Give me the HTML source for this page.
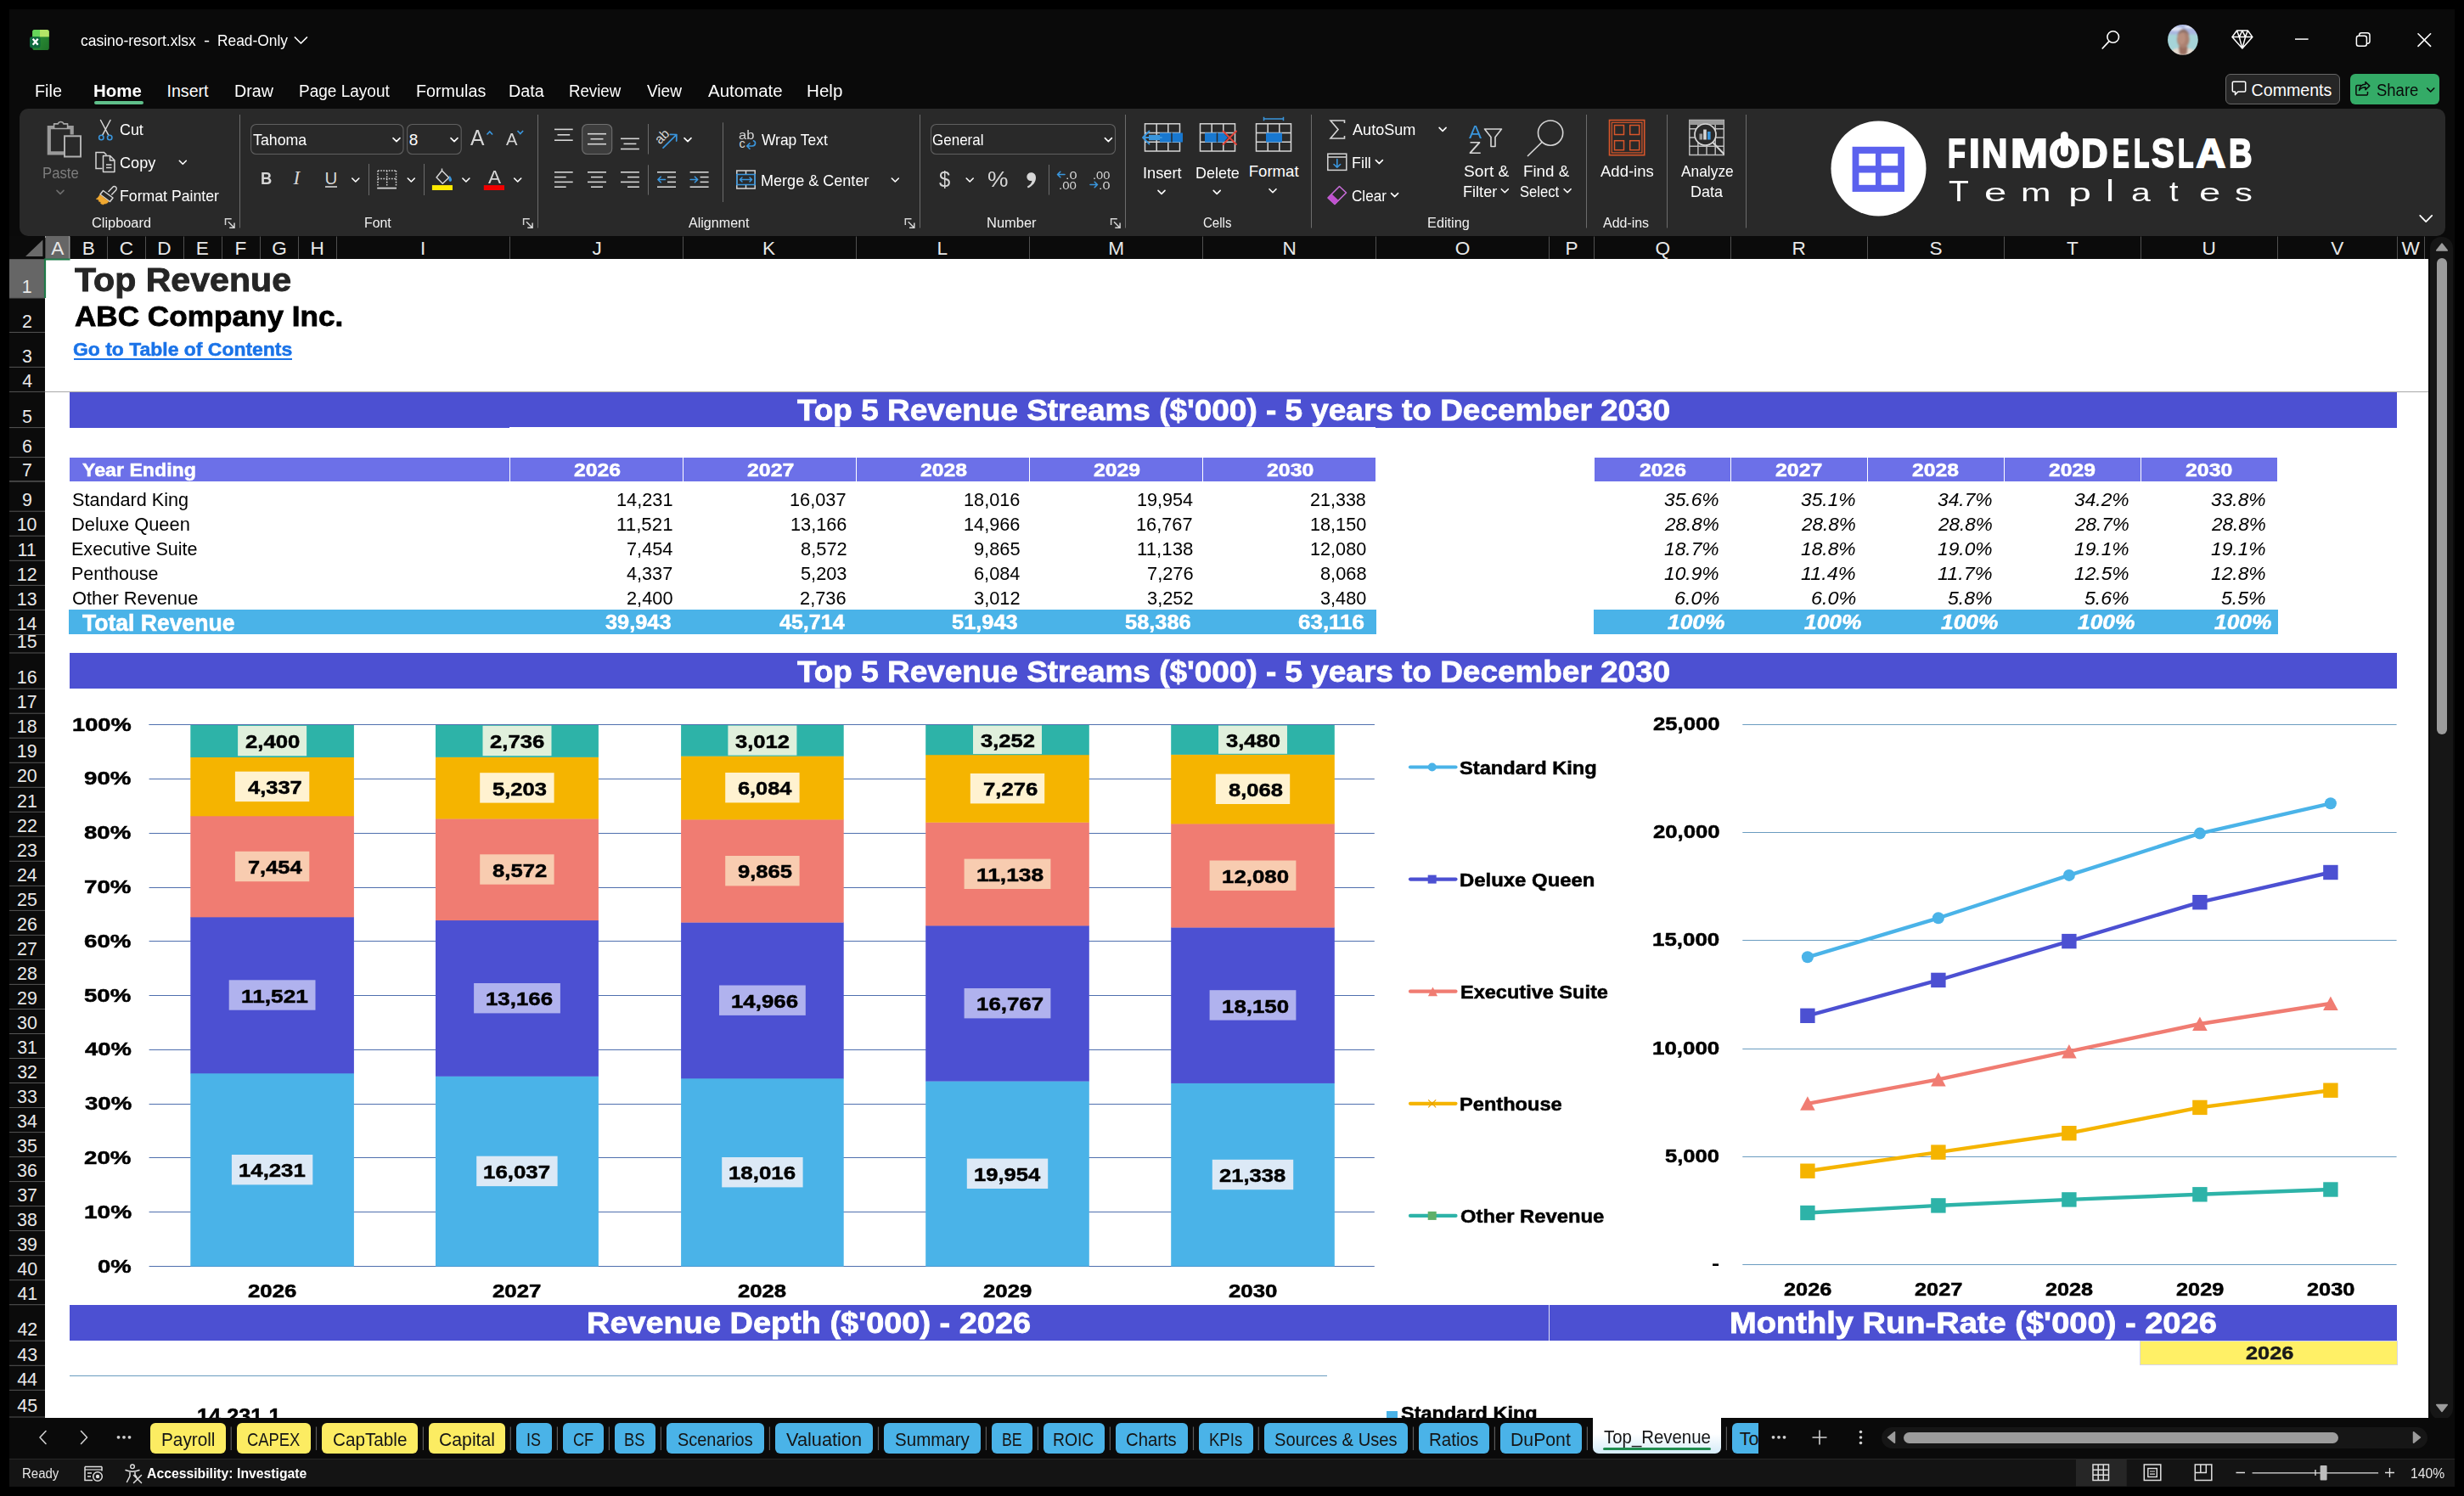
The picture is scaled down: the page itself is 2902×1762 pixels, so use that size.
<!DOCTYPE html>
<html><head><meta charset="utf-8"><title>casino-resort.xlsx - Excel</title>
<style>
html,body{margin:0;padding:0;background:#000;}
body{width:2902px;height:1762px;position:relative;overflow:hidden;font-family:"Liberation Sans",sans-serif;}
svg{position:absolute;left:0;top:0;overflow:visible}
</style></head><body>
<div style="position:absolute;left:11.0px;top:11.0px;width:2880.0px;height:1740.0px;background:#0a0a0a;"></div>
<svg width="2902" height="140"><g>
<defs><linearGradient id="xg" x1="0" y1="0" x2="1" y2="1"><stop offset="0" stop-color="#2f9a3a"/><stop offset="1" stop-color="#1f7229"/></linearGradient><clipPath id="xc"><rect x="38.1" y="35" width="19.8" height="24" rx="2.8"/></clipPath></defs>
<g clip-path="url(#xc)"><rect x="38.1" y="35" width="19.8" height="24" fill="url(#xg)"/><rect x="38.1" y="35" width="8.9" height="8.4" fill="#66d65a"/><rect x="47" y="35" width="10.900" height="8.400" fill="#b3e567"/></g>
<rect x="35" y="43.2" width="12.6" height="13.300" rx="2.400" fill="#0f6a3d"/>
<path d="M38.700 45.700l6 7M44.700 45.700l-6 7" stroke="#fff" stroke-width="2.300" fill="none"/>
</g>
<path d="M347.4 44.0 L354.4 51.0 L361.4 44.0" fill="none" stroke="#fff" stroke-width="1.7" stroke-linecap="round" stroke-linejoin="round"/>
<circle cx="2488.7" cy="43.5" r="6.8" fill="none" stroke="#fff" stroke-width="1.6"/><path d="M2484 48.6L2476.2 57" stroke="#fff" stroke-width="1.7" stroke-linecap="round"/>
<path d="M2634.5 36h12.8l5.6 7.6-12 13.4-12-13.4z M2629 43.6h23.8 M2634.5 36l2.8 7.6 3.6 13.4 3.6-13.4 2.8-7.6 M2637.3 43.6l3.6-7.6 3.6 7.6" fill="none" stroke="#fff" stroke-width="1.5" stroke-linejoin="round"/>
<path d="M2703 46.1h15.6" stroke="#fff" stroke-width="1.5"/>
<rect x="2775.4" y="42.2" width="12" height="12" rx="2.5" fill="none" stroke="#fff" stroke-width="1.5"/><path d="M2778.6 42v-0.6a2.6 2.6 0 0 1 2.6-2.6h7a2.8 2.8 0 0 1 2.8 2.8v7a2.6 2.6 0 0 1-2.6 2.6h-0.8" fill="none" stroke="#fff" stroke-width="1.5"/>
<path d="M2848 39.8l14.6 14.6M2862.6 39.8l-14.6 14.6" stroke="#fff" stroke-width="1.6" stroke-linecap="round"/>
<defs><radialGradient id="av" cx="50%" cy="55%" r="50%"><stop offset="0" stop-color="#b98f7c"/><stop offset="0.42" stop-color="#c4a090"/><stop offset="0.5" stop-color="#a9c6d4"/><stop offset="1" stop-color="#8fc0d6"/></radialGradient><clipPath id="avc"><circle cx="2570.9" cy="46.9" r="17.9"/></clipPath></defs>
<g clip-path="url(#avc)"><g style="filter:blur(1px)"><rect x="2550" y="26" width="42" height="42" fill="#a5d4d8"/><rect x="2550" y="26" width="42" height="14.500" fill="#a9b6e0"/><ellipse cx="2562" cy="34" rx="9" ry="2.500" fill="#dfe4f4"/><ellipse cx="2580" cy="31.500" rx="8" ry="2.200" fill="#dde2f3"/>
<path d="M2553 68c1-7 6-10.500 12-11.500h12c6 1 11 4.500 12 11.500z" fill="#e3dad0"/><path d="M2566 55h10.500l-1 8c-2.500 2-6 2-8.500 0z" fill="#9a6f60"/>
<ellipse cx="2571.300" cy="46.300" rx="7.300" ry="10.300" fill="#ab8070"/><ellipse cx="2569.500" cy="45" rx="4.500" ry="7.500" fill="#b98f7e"/><path d="M2564.500 42c1-5 4-7.500 7-7.500s6 2.500 7 7.500c-2-3-4.500-4-7-4s-5 1-7 4z" fill="#8d7068"/></g></g>
</svg>
<span style="position:absolute;left:94.50px;top:39.00px;font:normal 400 18.20px/18.20px 'Liberation Sans',sans-serif;color:#ffffff;white-space:pre;transform-origin:0 0;transform:scaleX(0.9596);">casino-resort.xlsx</span>
<span style="position:absolute;left:240.34px;top:39.00px;font:normal 400 18.20px/18.20px 'Liberation Sans',sans-serif;color:#ffffff;white-space:pre;transform-origin:0 0;transform:scaleX(1.1662);">-</span>
<span style="position:absolute;left:256.21px;top:39.00px;font:normal 400 18.20px/18.20px 'Liberation Sans',sans-serif;color:#ffffff;white-space:pre;transform-origin:0 0;transform:scaleX(0.9551);">Read-Only</span>
<span style="position:absolute;left:40.92px;top:98.00px;font:normal 400 19.60px/19.60px 'Liberation Sans',sans-serif;color:#ffffff;white-space:pre;transform-origin:0 0;transform:scaleX(1.0101);">File</span>
<span style="position:absolute;left:110.17px;top:98.00px;font:normal 700 19.60px/19.60px 'Liberation Sans',sans-serif;color:#ffffff;white-space:pre;transform-origin:0 0;transform:scaleX(1.0433);">Home</span>
<span style="position:absolute;left:196.54px;top:98.00px;font:normal 400 19.60px/19.60px 'Liberation Sans',sans-serif;color:#ffffff;white-space:pre;transform-origin:0 0;">Insert</span>
<span style="position:absolute;left:275.92px;top:98.00px;font:normal 400 19.60px/19.60px 'Liberation Sans',sans-serif;color:#ffffff;white-space:pre;transform-origin:0 0;transform:scaleX(1.0046);">Draw</span>
<span style="position:absolute;left:351.78px;top:98.00px;font:normal 400 19.60px/19.60px 'Liberation Sans',sans-serif;color:#ffffff;white-space:pre;transform-origin:0 0;transform:scaleX(0.9706);">Page Layout</span>
<span style="position:absolute;left:489.62px;top:98.00px;font:normal 400 19.60px/19.60px 'Liberation Sans',sans-serif;color:#ffffff;white-space:pre;transform-origin:0 0;transform:scaleX(1.0078);">Formulas</span>
<span style="position:absolute;left:598.92px;top:98.00px;font:normal 400 19.60px/19.60px 'Liberation Sans',sans-serif;color:#ffffff;white-space:pre;transform-origin:0 0;transform:scaleX(1.0104);">Data</span>
<span style="position:absolute;left:669.81px;top:98.00px;font:normal 400 19.60px/19.60px 'Liberation Sans',sans-serif;color:#ffffff;white-space:pre;transform-origin:0 0;transform:scaleX(0.9518);">Review</span>
<span style="position:absolute;left:761.80px;top:98.00px;font:normal 400 19.60px/19.60px 'Liberation Sans',sans-serif;color:#ffffff;white-space:pre;transform-origin:0 0;transform:scaleX(0.9728);">View</span>
<span style="position:absolute;left:834.20px;top:98.00px;font:normal 400 19.60px/19.60px 'Liberation Sans',sans-serif;color:#ffffff;white-space:pre;transform-origin:0 0;transform:scaleX(1.0445);">Automate</span>
<span style="position:absolute;left:949.75px;top:98.00px;font:normal 400 19.60px/19.60px 'Liberation Sans',sans-serif;color:#ffffff;white-space:pre;transform-origin:0 0;transform:scaleX(1.0520);">Help</span>
<div style="position:absolute;left:110.9px;top:119.4px;width:58.0px;height:3.6px;background:#5fbf8a;border-radius:2px;"></div>
<div style="position:absolute;left:2621.2px;top:87.1px;width:134.5px;height:35.5px;background:#262626;border:1px solid #666;border-radius:6px;box-sizing:border-box;"></div>
<div style="position:absolute;left:2767.9px;top:87.1px;width:105.3px;height:35.5px;background:#34ab67;border-radius:6px;"></div>
<svg width="2902" height="140"><path d="M2630.5 96.2h13a1.2 1.2 0 0 1 1.2 1.2v9.4a1.2 1.2 0 0 1-1.2 1.2h-7.6l-3.4 3.6v-3.6h-2a1.2 1.2 0 0 1-1.2-1.2v-9.4a1.2 1.2 0 0 1 1.2-1.2z" fill="none" stroke="#fff" stroke-width="1.5" stroke-linejoin="round"/><path d="M2781 100.5h-4.6a1.5 1.5 0 0 0-1.5 1.5v8.6a1.5 1.5 0 0 0 1.5 1.5h10.6a1.5 1.5 0 0 0 1.5-1.5v-2.5 M2786 96.5l4.8 4.6-4.8 4.6v-2.9c-3.6 0-5.8 1.2-7.4 3.6 0.4-4.4 3-7 7.4-7.2z" fill="none" stroke="#0a0a0a" stroke-width="1.5" stroke-linejoin="round"/><path d="M2858.7 104.0 L2862.7 108.0 L2866.7 104.0" fill="none" stroke="#0a0a0a" stroke-width="1.7" stroke-linecap="round" stroke-linejoin="round"/></svg>
<span style="position:absolute;left:2651.62px;top:97.00px;font:normal 400 19.60px/19.60px 'Liberation Sans',sans-serif;color:#ffffff;white-space:pre;transform-origin:0 0;">Comments</span>
<span style="position:absolute;left:2798.97px;top:97.00px;font:normal 400 19.60px/19.60px 'Liberation Sans',sans-serif;color:#0a0a0a;white-space:pre;transform-origin:0 0;transform:scaleX(0.9431);">Share</span>
<div style="position:absolute;left:23.0px;top:128.0px;width:2856.5px;height:150.0px;background:#292929;border-radius:10px;"></div>
<svg width="2902" height="300"><path d="M282.5 135V268.5" stroke="#6c6c6c" stroke-width="1"/><path d="M633.5 135V268.5" stroke="#6c6c6c" stroke-width="1"/><path d="M1083.5 135V268.5" stroke="#6c6c6c" stroke-width="1"/><path d="M1325.5 135V268.5" stroke="#6c6c6c" stroke-width="1"/><path d="M1544.5 135V268.5" stroke="#6c6c6c" stroke-width="1"/><path d="M1868.5 135V268.5" stroke="#6c6c6c" stroke-width="1"/><path d="M1963.5 135V268.5" stroke="#6c6c6c" stroke-width="1"/><path d="M2056.5 135V268.5" stroke="#6c6c6c" stroke-width="1"/><path d="M434.5 193V230" stroke="#6c6c6c" stroke-width="1"/><path d="M499.5 193V230" stroke="#6c6c6c" stroke-width="1"/><path d="M763.5 146V181.6" stroke="#6c6c6c" stroke-width="1"/><path d="M763.5 194.3V229.6" stroke="#6c6c6c" stroke-width="1"/><path d="M851.5 144.3V238" stroke="#6c6c6c" stroke-width="1"/><path d="M1235.5 194V229.6" stroke="#6c6c6c" stroke-width="1"/><path d="M63 150.2H57.8V180.400H75M80 150.200H84.700V158.500" fill="none" stroke="#9a9a9a" stroke-width="4.200"/><path d="M63.600 151.500v-5.600h4.600a3.600 3.600 0 0 1 6.800 0h4.600v5.600z" fill="#292929" stroke="#a8a8a8" stroke-width="1.600" stroke-linejoin="round"/><rect x="76" y="160.300" width="19" height="24.200" fill="#292929" stroke="#b0b0b0" stroke-width="2"/><path d="M67.0 224.4 L71.0 228.4 L75.0 224.4" fill="none" stroke="#6e6e6e" stroke-width="1.6" stroke-linecap="round" stroke-linejoin="round"/><path d="M118.5 141.5l9.3 17.6M130 141.5l-9.3 17.6" stroke="#d6d6d6" stroke-width="1.5" stroke-linecap="round"/><circle cx="119.3" cy="162" r="2.7" fill="none" stroke="#3a96dd" stroke-width="1.6"/><circle cx="129.2" cy="162" r="2.7" fill="none" stroke="#3a96dd" stroke-width="1.6"/><path d="M120.5 198.5h-7.5v-19h9.5l3 3" fill="none" stroke="#d6d6d6" stroke-width="1.5"/><path d="M121.5 183.5h8.2l5.2 5.2v13.8h-13.4z M129.5 183.8v5.2h5.2" fill="none" stroke="#d6d6d6" stroke-width="1.5" stroke-linejoin="round"/><path d="M125 194h6.5M125 197.5h6.5" stroke="#d6d6d6" stroke-width="1.4"/><path d="M211.3 189.3 L215.3 193.3 L219.3 189.3" fill="none" stroke="#ffffff" stroke-width="1.6" stroke-linecap="round" stroke-linejoin="round"/><path d="M127.5 226l5.2-5.6a2.6 2.6 0 0 1 3.8 3.6l-5.2 5.6" fill="none" stroke="#d6d6d6" stroke-width="1.5"/><path d="M121.5 224.5l11.5 8.5-3.5 4.5-11.5-8.5z" fill="none" stroke="#d6d6d6" stroke-width="1.5" stroke-linejoin="round"/><path d="M117.5 229.5l10.5 7.8c-1.5 2.2-3.2 3-5.2 2.6l-1.2 1.2-3-1.4 0.4-1.4-2.8-1.2 0.4-1.6-3.4-1.2c1.8-1 3.2-2.6 4.300-4.800z" fill="#f0a830" stroke="#f0a830" stroke-width="0.6"/><path d="M265.5 265.0V257.8H272.7" fill="none" stroke="#d6d6d6" stroke-width="1.5"/><path d="M268.9 261.2L275.7 268.0M276.0 262.5V268.3H270.2" fill="none" stroke="#d6d6d6" stroke-width="1.5"/><path d="M616.6 265.0V257.8H623.8" fill="none" stroke="#d6d6d6" stroke-width="1.5"/><path d="M620.0 261.2L626.8 268.0M627.1 262.5V268.3H621.3" fill="none" stroke="#d6d6d6" stroke-width="1.5"/><path d="M1066.3 265.0V257.8H1073.5" fill="none" stroke="#d6d6d6" stroke-width="1.5"/><path d="M1069.7 261.2L1076.5 268.0M1076.8 262.5V268.3H1071.0" fill="none" stroke="#d6d6d6" stroke-width="1.5"/><path d="M1308.6 265.0V257.8H1315.8" fill="none" stroke="#d6d6d6" stroke-width="1.5"/><path d="M1312.0 261.2L1318.8 268.0M1319.1 262.5V268.3H1313.3" fill="none" stroke="#d6d6d6" stroke-width="1.5"/><rect x="295.6" y="146.5" width="179.4" height="35" rx="6" fill="#292929" stroke="#606060" stroke-width="1.1"/><rect x="479.6" y="146.5" width="63.6" height="35" rx="6" fill="#292929" stroke="#606060" stroke-width="1.1"/><path d="M463.0 162.6 L467.0 166.6 L471.0 162.6" fill="none" stroke="#ffffff" stroke-width="1.6" stroke-linecap="round" stroke-linejoin="round"/><path d="M531.0 162.6 L535.0 166.6 L539.0 162.6" fill="none" stroke="#ffffff" stroke-width="1.6" stroke-linecap="round" stroke-linejoin="round"/><path d="M573.5 158.5l3.300-3.600 3.300 3.600" fill="none" stroke="#3a96dd" stroke-width="1.7"/><path d="M609.5 154l3.300 3.600 3.300-3.600" fill="none" stroke="#3a96dd" stroke-width="1.7"/><path d="M383.0 220.0H397.0" stroke="#d6d6d6" stroke-width="1.6"/><path d="M414.8 210.0 L418.8 214.0 L422.8 210.0" fill="none" stroke="#ffffff" stroke-width="1.6" stroke-linecap="round" stroke-linejoin="round"/><path d="M445 201h21.500M445 201v19M466.500 201v19M455.700 201v19M445 210.500h21.500" fill="none" stroke="#d6d6d6" stroke-width="1.5" stroke-dasharray="1.600 1.600"/><path d="M444.2 221.6H467.0" stroke="#d6d6d6" stroke-width="1.8"/><path d="M480.3 210.0 L484.3 214.0 L488.3 210.0" fill="none" stroke="#ffffff" stroke-width="1.6" stroke-linecap="round" stroke-linejoin="round"/><path d="M520.500 201l8.200 8.200-7.400 7-7.200-7.200z M520.500 201v-2.500" fill="none" stroke="#d6d6d6" stroke-width="1.5" stroke-linejoin="round"/><path d="M529.500 206.500c2.200 3 2.600 4.600 2.600 5.600a1.800 1.800 0 0 1-3.600 0c0-1 .4-2.600 1-5.600z" fill="#3a96dd"/><rect x="508.900" y="218.100" width="24.100" height="5.900" fill="#ffeb00"/><path d="M544.9 210.0 L548.9 214.0 L552.9 210.0" fill="none" stroke="#ffffff" stroke-width="1.6" stroke-linecap="round" stroke-linejoin="round"/><rect x="569.800" y="218.100" width="24.200" height="5.900" fill="#f00000"/><path d="M605.7 210.0 L609.7 214.0 L613.7 210.0" fill="none" stroke="#ffffff" stroke-width="1.6" stroke-linecap="round" stroke-linejoin="round"/><path d="M653.0 152.4H674.7" stroke="#d6d6d6" stroke-width="1.6"/><path d="M656.5 158.8H671.2" stroke="#d6d6d6" stroke-width="1.6"/><path d="M653.0 165.2H674.7" stroke="#d6d6d6" stroke-width="1.6"/><rect x="685.700" y="146.500" width="35" height="35" rx="6" fill="#3d3d3d" stroke="#707070" stroke-width="1.1"/><path d="M692.0 157.7H714.0" stroke="#d6d6d6" stroke-width="1.6"/><path d="M695.5 163.7H710.5" stroke="#d6d6d6" stroke-width="1.6"/><path d="M692.0 169.7H714.0" stroke="#d6d6d6" stroke-width="1.6"/><path d="M731.0 163.3H752.9" stroke="#d6d6d6" stroke-width="1.6"/><path d="M734.5 169.4H749.4" stroke="#d6d6d6" stroke-width="1.6"/><path d="M731.0 175.5H752.9" stroke="#d6d6d6" stroke-width="1.6"/><path d="M781 174.200l15.500-15.400M789.300 158.300l7.600.2-.2 7.600" fill="none" stroke="#3a96dd" stroke-width="1.7" stroke-linecap="round" stroke-linejoin="round"/><path d="M806.0 162.6 L810.0 166.6 L814.0 162.6" fill="none" stroke="#ffffff" stroke-width="1.6" stroke-linecap="round" stroke-linejoin="round"/><path d="M653.0 202.8H674.7" stroke="#d6d6d6" stroke-width="1.6"/><path d="M653.0 208.6H666.7" stroke="#d6d6d6" stroke-width="1.6"/><path d="M653.0 214.4H674.7" stroke="#d6d6d6" stroke-width="1.6"/><path d="M653.0 220.2H666.7" stroke="#d6d6d6" stroke-width="1.6"/><path d="M692.0 202.8H714.0" stroke="#d6d6d6" stroke-width="1.6"/><path d="M696.0 208.6H710.0" stroke="#d6d6d6" stroke-width="1.6"/><path d="M692.0 214.4H714.0" stroke="#d6d6d6" stroke-width="1.6"/><path d="M696.0 220.2H710.0" stroke="#d6d6d6" stroke-width="1.6"/><path d="M731.0 202.8H752.9" stroke="#d6d6d6" stroke-width="1.6"/><path d="M739.0 208.6H752.9" stroke="#d6d6d6" stroke-width="1.6"/><path d="M731.0 214.4H752.9" stroke="#d6d6d6" stroke-width="1.6"/><path d="M739.0 220.2H752.9" stroke="#d6d6d6" stroke-width="1.6"/><path d="M774.0 202.8H796.0" stroke="#d6d6d6" stroke-width="1.6"/><path d="M774.0 220.2H796.0" stroke="#d6d6d6" stroke-width="1.6"/><path d="M786.0 208.6H796.0" stroke="#d6d6d6" stroke-width="1.6"/><path d="M786.0 214.4H796.0" stroke="#d6d6d6" stroke-width="1.6"/><path d="M783.5 211.500H775M778.2 208.200l-3.300 3.300 3.300 3.300" fill="none" stroke="#3a96dd" stroke-width="1.6" stroke-linecap="round" stroke-linejoin="round"/><path d="M812.6 202.8H834.6" stroke="#d6d6d6" stroke-width="1.6"/><path d="M812.6 220.2H834.6" stroke="#d6d6d6" stroke-width="1.6"/><path d="M824.6 208.6H834.6" stroke="#d6d6d6" stroke-width="1.6"/><path d="M824.6 214.4H834.6" stroke="#d6d6d6" stroke-width="1.6"/><path d="M813.1 211.500H821.6M818.4 208.200l3.300 3.300-3.300 3.300" fill="none" stroke="#3a96dd" stroke-width="1.6" stroke-linecap="round" stroke-linejoin="round"/><path d="M887.500 165.800c3.200 1.200 2.600 6-1.500 6.200h-6M883 168.800l-3.300 3.200 3.300 3.200" fill="none" stroke="#3a96dd" stroke-width="1.6" stroke-linecap="round" stroke-linejoin="round"/><rect x="867.800" y="201" width="21.400" height="21" fill="none" stroke="#d6d6d6" stroke-width="1.5"/><path d="M878.500 201v4.500M878.500 217.500v4.500" stroke="#d6d6d6" stroke-width="1.5"/><rect x="867.800" y="205.500" width="21.400" height="12" fill="none" stroke="#3a96dd" stroke-width="1.5"/><path d="M871.500 211.500h14M874 209l-2.600 2.500 2.600 2.500M883 209l2.600 2.500-2.600 2.500" fill="none" stroke="#3a96dd" stroke-width="1.5" stroke-linecap="round" stroke-linejoin="round"/><path d="M1050.3 210.0 L1054.3 214.0 L1058.3 210.0" fill="none" stroke="#ffffff" stroke-width="1.6" stroke-linecap="round" stroke-linejoin="round"/><rect x="1096.500" y="146.500" width="217" height="35" rx="6" fill="#292929" stroke="#606060" stroke-width="1.1"/><path d="M1301.4 162.6 L1305.4 166.6 L1309.4 162.6" fill="none" stroke="#ffffff" stroke-width="1.6" stroke-linecap="round" stroke-linejoin="round"/><path d="M1138.2 210.0 L1142.2 214.0 L1146.2 210.0" fill="none" stroke="#ffffff" stroke-width="1.6" stroke-linecap="round" stroke-linejoin="round"/><path d="M1214.6 203.2c3.300 0 5.400 2.400 5.400 6 0 5.400-3.700 9.600-9.200 12.200l-1-1.600c3.300-1.800 5.300-4.100 5.700-7-.5.200-1 .3-1.600.3a4.900 4.900 0 0 1 .7-9.900z" fill="#d6d6d6"/><path d="M1254 205.500h-8.500M1248.800 202.300l-3.300 3.200 3.300 3.200" fill="none" stroke="#3a96dd" stroke-width="1.6" stroke-linecap="round" stroke-linejoin="round"/><path d="M1284 217.500h8.500M1289.200 214.300l3.300 3.200-3.300 3.200" fill="none" stroke="#3a96dd" stroke-width="1.6" stroke-linecap="round" stroke-linejoin="round"/><rect x="1348.5" y="145.8" width="41.0" height="32.19999999999999" fill="none" stroke="#d6d6d6" stroke-width="1.5"/><path d="M1362.2 145.8V178" stroke="#d6d6d6" stroke-width="1.5"/><path d="M1375.8 145.8V178" stroke="#d6d6d6" stroke-width="1.5"/><path d="M1348.5 156.5H1389.5" stroke="#d6d6d6" stroke-width="1.5"/><path d="M1348.5 167.3H1389.5" stroke="#d6d6d6" stroke-width="1.5"/><rect x="1366" y="156.500" width="27" height="11" fill="#1878d0"/><path d="M1380 156.500v11" stroke="#292929" stroke-width="1.5"/><path d="M1368 162h-21M1353.500 154.500l-7.500 7.500 7.500 7.500" fill="none" stroke="#3a96dd" stroke-width="1.8" stroke-linecap="round" stroke-linejoin="round"/><path d="M1353 158.800h13v6.400h-13" fill="#3a96dd"/><rect x="1413.5" y="145.8" width="41.0" height="32.19999999999999" fill="none" stroke="#d6d6d6" stroke-width="1.5"/><path d="M1427.2 145.8V178" stroke="#d6d6d6" stroke-width="1.5"/><path d="M1440.8 145.8V178" stroke="#d6d6d6" stroke-width="1.5"/><path d="M1413.5 156.5H1454.5" stroke="#d6d6d6" stroke-width="1.5"/><path d="M1413.5 167.3H1454.5" stroke="#d6d6d6" stroke-width="1.5"/><rect x="1419" y="156.500" width="22" height="11" fill="#1878d0"/><path d="M1433.500 156.500v11" stroke="#292929" stroke-width="1.5"/><path d="M1441 156.500l5 5.500-5 5.500z" fill="#1878d0"/><path d="M1440.500 154.500l15.500 15.500M1456 154.500l-15.500 15.500" stroke="#e0443a" stroke-width="2" stroke-linecap="round"/><rect x="1479.5" y="145.8" width="41.0" height="32.19999999999999" fill="none" stroke="#d6d6d6" stroke-width="1.5"/><path d="M1493.2 145.8V178" stroke="#d6d6d6" stroke-width="1.5"/><path d="M1506.8 145.8V178" stroke="#d6d6d6" stroke-width="1.5"/><path d="M1479.5 156.5H1520.5" stroke="#d6d6d6" stroke-width="1.5"/><path d="M1479.5 167.3H1520.5" stroke="#d6d6d6" stroke-width="1.5"/><rect x="1491" y="156.500" width="19" height="11" fill="#1878d0"/><path d="M1488.500 140h23M1488.500 137.800v4.400M1511.500 137.800v4.400" stroke="#3a96dd" stroke-width="1.5"/><path d="M1364.0 224.4 L1368.0 228.4 L1372.0 224.4" fill="none" stroke="#ffffff" stroke-width="1.6" stroke-linecap="round" stroke-linejoin="round"/><path d="M1429.2 224.4 L1433.2 228.4 L1437.2 224.4" fill="none" stroke="#ffffff" stroke-width="1.6" stroke-linecap="round" stroke-linejoin="round"/><path d="M1495.0 222.7 L1499.0 226.7 L1503.0 222.7" fill="none" stroke="#ffffff" stroke-width="1.6" stroke-linecap="round" stroke-linejoin="round"/><path d="M1583.500 145v-3h-16.500l9 10.500-9 10.500h16.500v-3" fill="none" stroke="#d6d6d6" stroke-width="1.6" stroke-linejoin="miter"/><path d="M1695.1 150.4 L1699.1 154.4 L1703.1 150.4" fill="none" stroke="#ffffff" stroke-width="1.6" stroke-linecap="round" stroke-linejoin="round"/><rect x="1563.800" y="181.200" width="22" height="19.200" fill="none" stroke="#d6d6d6" stroke-width="1.5"/><path d="M1563.800 185h22" stroke="#d6d6d6" stroke-width="1.5"/><path d="M1574.800 187.500v9.500M1571 193.500l3.800 3.600 3.800-3.600" fill="none" stroke="#3a96dd" stroke-width="1.6" stroke-linecap="round" stroke-linejoin="round"/><path d="M1620.4 188.6 L1624.4 192.6 L1628.4 188.6" fill="none" stroke="#ffffff" stroke-width="1.6" stroke-linecap="round" stroke-linejoin="round"/><path d="M1577.500 219.500l8 7.500-13.500 13.500-8-7.500z" fill="none" stroke="#c66cd6" stroke-width="1.6" stroke-linejoin="round"/><path d="M1568.500 228.500l8 7.500-4.500 4.500-8-7.500z" fill="#c050d0"/><path d="M1638.6 227.6 L1642.6 231.6 L1646.6 227.6" fill="none" stroke="#ffffff" stroke-width="1.6" stroke-linecap="round" stroke-linejoin="round"/><path d="M1748.500 152h20l-7.500 9.500v11h-5v-11z" fill="none" stroke="#d6d6d6" stroke-width="1.6" stroke-linejoin="round"/><path d="M1768.3 222.7 L1772.3 226.7 L1776.3 222.7" fill="none" stroke="#ffffff" stroke-width="1.6" stroke-linecap="round" stroke-linejoin="round"/><circle cx="1826.100" cy="156.600" r="14.600" fill="none" stroke="#d6d6d6" stroke-width="1.6"/><path d="M1816 167.500l-16.500 16" stroke="#d6d6d6" stroke-width="1.7" stroke-linecap="round"/><path d="M1842.1 222.7 L1846.1 226.7 L1850.1 222.7" fill="none" stroke="#ffffff" stroke-width="1.6" stroke-linecap="round" stroke-linejoin="round"/><rect x="1895.500" y="141.500" width="41.200" height="41.200" fill="none" stroke="#d8562a" stroke-width="1.6"/><rect x="1898.300" y="144.300" width="35.600" height="35.600" fill="none" stroke="#d8562a" stroke-width="1.2"/><rect x="1901.5" y="147.5" width="11" height="11" fill="none" stroke="#d8562a" stroke-width="1.5"/><rect x="1919.7" y="147.5" width="11" height="11" fill="none" stroke="#d8562a" stroke-width="1.5"/><rect x="1901.5" y="165.7" width="11" height="11" fill="none" stroke="#d8562a" stroke-width="1.5"/><rect x="1919.7" y="165.7" width="11" height="11" fill="none" stroke="#d8562a" stroke-width="1.5"/><rect x="1989.8" y="141.5" width="40.5" height="41.0" fill="none" stroke="#bdbdbd" stroke-width="1.5"/><path d="M1999.9 141.5V182.5" stroke="#bdbdbd" stroke-width="1.5"/><path d="M2010.0 141.5V182.5" stroke="#bdbdbd" stroke-width="1.5"/><path d="M2020.2 141.5V182.5" stroke="#bdbdbd" stroke-width="1.5"/><path d="M1989.8 151.8H2030.3" stroke="#bdbdbd" stroke-width="1.5"/><path d="M1989.8 162.0H2030.3" stroke="#bdbdbd" stroke-width="1.5"/><path d="M1989.8 172.2H2030.3" stroke="#bdbdbd" stroke-width="1.5"/><rect x="1989.800" y="141.500" width="40.500" height="5.500" fill="#9a9a9a"/><circle cx="2008.500" cy="158.500" r="12.500" fill="#292929" stroke="#d6d6d6" stroke-width="1.7"/><rect x="2001.500" y="157.500" width="3.600" height="7" fill="#9a9a9a"/><rect x="2006.200" y="152.500" width="3.600" height="12" fill="#d6d6d6"/><rect x="2011" y="155" width="3.600" height="9.500" fill="#3a96dd"/><path d="M2017.500 168l13 13.500" stroke="#d6d6d6" stroke-width="2"/><circle cx="2212.500" cy="198.400" r="56" fill="#fff"/><rect x="2181.600" y="172.800" width="61.400" height="53.100" fill="#5b61ee"/><rect x="2189.4" y="180.9" width="19.500" height="14.300" fill="#fff"/><rect x="2215.7" y="180.9" width="19.500" height="14.300" fill="#fff"/><rect x="2189.4" y="203.5" width="19.500" height="14.300" fill="#fff"/><rect x="2215.7" y="203.5" width="19.500" height="14.300" fill="#fff"/><path d="M2850.2 253.8 L2857.2 261.2 L2864.2 253.8" fill="none" stroke="#ffffff" stroke-width="1.7" stroke-linecap="round" stroke-linejoin="round"/></svg>
<span style="position:absolute;left:50.36px;top:195.00px;font:normal 400 18.60px/18.60px 'Liberation Sans',sans-serif;color:#7d7d7d;white-space:pre;transform-origin:0 0;transform:scaleX(0.8983);">Paste</span>
<span style="position:absolute;left:141.31px;top:144.00px;font:normal 400 18.60px/18.60px 'Liberation Sans',sans-serif;color:#ffffff;white-space:pre;transform-origin:0 0;transform:scaleX(0.9606);">Cut</span>
<span style="position:absolute;left:141.29px;top:183.00px;font:normal 400 18.60px/18.60px 'Liberation Sans',sans-serif;color:#ffffff;white-space:pre;transform-origin:0 0;transform:scaleX(0.9741);">Copy</span>
<span style="position:absolute;left:140.79px;top:222.00px;font:normal 400 18.60px/18.60px 'Liberation Sans',sans-serif;color:#ffffff;white-space:pre;transform-origin:0 0;transform:scaleX(0.9507);">Format Painter</span>
<span style="position:absolute;left:108.08px;top:255.00px;font:normal 400 15.80px/15.80px 'Liberation Sans',sans-serif;color:#f2f2f2;white-space:pre;transform-origin:0 0;transform:scaleX(1.0348);">Clipboard</span>
<span style="position:absolute;left:429.03px;top:255.00px;font:normal 400 15.80px/15.80px 'Liberation Sans',sans-serif;color:#f2f2f2;white-space:pre;transform-origin:0 0;transform:scaleX(1.0047);">Font</span>
<span style="position:absolute;left:810.60px;top:255.00px;font:normal 400 15.80px/15.80px 'Liberation Sans',sans-serif;color:#f2f2f2;white-space:pre;transform-origin:0 0;transform:scaleX(1.0178);">Alignment</span>
<span style="position:absolute;left:1161.88px;top:255.00px;font:normal 400 15.80px/15.80px 'Liberation Sans',sans-serif;color:#f2f2f2;white-space:pre;transform-origin:0 0;transform:scaleX(1.0427);">Number</span>
<span style="position:absolute;left:1417.35px;top:255.00px;font:normal 400 15.80px/15.80px 'Liberation Sans',sans-serif;color:#f2f2f2;white-space:pre;transform-origin:0 0;transform:scaleX(0.9523);">Cells</span>
<span style="position:absolute;left:1680.99px;top:255.00px;font:normal 400 15.80px/15.80px 'Liberation Sans',sans-serif;color:#f2f2f2;white-space:pre;transform-origin:0 0;transform:scaleX(1.0331);">Editing</span>
<span style="position:absolute;left:1888.00px;top:255.00px;font:normal 400 15.80px/15.80px 'Liberation Sans',sans-serif;color:#f2f2f2;white-space:pre;transform-origin:0 0;transform:scaleX(1.0093);">Add-ins</span>
<span style="position:absolute;left:298.44px;top:155.00px;font:normal 400 19.00px/19.00px 'Liberation Sans',sans-serif;color:#ffffff;white-space:pre;transform-origin:0 0;transform:scaleX(0.9350);">Tahoma</span>
<span style="position:absolute;left:481.64px;top:155.00px;font:normal 400 19.00px/19.00px 'Liberation Sans',sans-serif;color:#ffffff;white-space:pre;transform-origin:0 0;">8</span>
<span style="position:absolute;left:554.40px;top:150.00px;font:normal 400 25.50px/25.50px 'Liberation Sans',sans-serif;color:#d6d6d6;white-space:pre;transform-origin:0 0;transform:scaleX(0.9671);">A</span>
<span style="position:absolute;left:595.80px;top:153.00px;font:normal 400 21.00px/21.00px 'Liberation Sans',sans-serif;color:#d6d6d6;white-space:pre;transform-origin:0 0;transform:scaleX(0.9595);">A</span>
<span style="position:absolute;left:306.61px;top:199.00px;font:normal 700 21.00px/21.00px 'Liberation Sans',sans-serif;color:#d6d6d6;white-space:pre;transform-origin:0 0;transform:scaleX(0.8743);">B</span>
<span style="position:absolute;left:345.5px;top:197.5px;font:italic 400 23px/23px 'Liberation Serif',serif;color:#d6d6d6">I</span>
<span style="position:absolute;left:382.62px;top:200.00px;font:normal 400 20.50px/20.50px 'Liberation Sans',sans-serif;color:#d6d6d6;white-space:pre;transform-origin:0 0;">U</span>
<span style="position:absolute;left:574.50px;top:198.00px;font:normal 400 22.00px/22.00px 'Liberation Sans',sans-serif;color:#d6d6d6;white-space:pre;transform-origin:0 0;transform:scaleX(1.0253);">A</span>
<span style="position:absolute;left:770.5px;top:152.5px;font:400 15.5px/15.5px 'Liberation Sans',sans-serif;color:#d6d6d6;transform:rotate(-45deg);transform-origin:50% 50%;">ab</span>
<span style="position:absolute;left:870.14px;top:152.00px;font:normal 400 14.60px/14.60px 'Liberation Sans',sans-serif;color:#d6d6d6;white-space:pre;transform-origin:0 0;transform:scaleX(1.1305);">ab</span>
<span style="position:absolute;left:870.42px;top:162.00px;font:normal 400 14.60px/14.60px 'Liberation Sans',sans-serif;color:#d6d6d6;white-space:pre;transform-origin:0 0;">c</span>
<span style="position:absolute;left:897.41px;top:156.00px;font:normal 400 18.60px/18.60px 'Liberation Sans',sans-serif;color:#ffffff;white-space:pre;transform-origin:0 0;transform:scaleX(0.9363);">Wrap Text</span>
<span style="position:absolute;left:896.06px;top:204.00px;font:normal 400 18.60px/18.60px 'Liberation Sans',sans-serif;color:#ffffff;white-space:pre;transform-origin:0 0;transform:scaleX(0.9710);">Merge &amp; Center</span>
<span style="position:absolute;left:1098.25px;top:155.00px;font:normal 400 19.00px/19.00px 'Liberation Sans',sans-serif;color:#ffffff;white-space:pre;transform-origin:0 0;transform:scaleX(0.8950);">General</span>
<span style="position:absolute;left:1106.26px;top:199.00px;font:normal 400 25.00px/25.00px 'Liberation Sans',sans-serif;color:#d6d6d6;white-space:pre;transform-origin:0 0;transform:scaleX(0.9509);">$</span>
<span style="position:absolute;left:1162.74px;top:198.00px;font:normal 400 26.00px/26.00px 'Liberation Sans',sans-serif;color:#d6d6d6;white-space:pre;transform-origin:0 0;transform:scaleX(1.0600);">%</span>
<span style="position:absolute;left:1254.54px;top:200.00px;font:normal 400 13.50px/13.50px 'Liberation Sans',sans-serif;color:#d6d6d6;white-space:pre;transform-origin:0 0;transform:scaleX(1.1998);">.0</span>
<span style="position:absolute;left:1247.15px;top:212.00px;font:normal 400 13.50px/13.50px 'Liberation Sans',sans-serif;color:#d6d6d6;white-space:pre;transform-origin:0 0;transform:scaleX(1.1126);">.00</span>
<span style="position:absolute;left:1286.68px;top:200.00px;font:normal 400 13.50px/13.50px 'Liberation Sans',sans-serif;color:#d6d6d6;white-space:pre;transform-origin:0 0;transform:scaleX(1.0833);">.00</span>
<span style="position:absolute;left:1293.54px;top:212.00px;font:normal 400 13.50px/13.50px 'Liberation Sans',sans-serif;color:#d6d6d6;white-space:pre;transform-origin:0 0;transform:scaleX(1.1998);">.0</span>
<span style="position:absolute;left:1345.66px;top:195.00px;font:normal 400 18.60px/18.60px 'Liberation Sans',sans-serif;color:#ffffff;white-space:pre;transform-origin:0 0;transform:scaleX(0.9791);">Insert</span>
<span style="position:absolute;left:1407.96px;top:195.00px;font:normal 400 18.60px/18.60px 'Liberation Sans',sans-serif;color:#ffffff;white-space:pre;transform-origin:0 0;transform:scaleX(0.9644);">Delete</span>
<span style="position:absolute;left:1470.71px;top:193.00px;font:normal 400 18.60px/18.60px 'Liberation Sans',sans-serif;color:#ffffff;white-space:pre;transform-origin:0 0;">Format</span>
<span style="position:absolute;left:1593.20px;top:144.00px;font:normal 400 18.60px/18.60px 'Liberation Sans',sans-serif;color:#ffffff;white-space:pre;transform-origin:0 0;transform:scaleX(0.9731);">AutoSum</span>
<span style="position:absolute;left:1591.77px;top:183.00px;font:normal 400 18.60px/18.60px 'Liberation Sans',sans-serif;color:#ffffff;white-space:pre;transform-origin:0 0;transform:scaleX(0.9611);">Fill</span>
<span style="position:absolute;left:1592.34px;top:222.00px;font:normal 400 18.60px/18.60px 'Liberation Sans',sans-serif;color:#ffffff;white-space:pre;transform-origin:0 0;transform:scaleX(0.9200);">Clear</span>
<span style="position:absolute;left:1729.50px;top:145.00px;font:normal 400 22.00px/22.00px 'Liberation Sans',sans-serif;color:#3a96dd;white-space:pre;transform-origin:0 0;transform:scaleX(1.0253);">A</span>
<span style="position:absolute;left:1729.79px;top:164.00px;font:normal 400 20.00px/20.00px 'Liberation Sans',sans-serif;color:#d6d6d6;white-space:pre;transform-origin:0 0;transform:scaleX(1.1818);">Z</span>
<span style="position:absolute;left:1724.13px;top:193.00px;font:normal 400 18.60px/18.60px 'Liberation Sans',sans-serif;color:#ffffff;white-space:pre;transform-origin:0 0;transform:scaleX(1.0337);">Sort &amp;</span>
<span style="position:absolute;left:1722.85px;top:217.00px;font:normal 400 18.60px/18.60px 'Liberation Sans',sans-serif;color:#ffffff;white-space:pre;transform-origin:0 0;transform:scaleX(0.9741);">Filter</span>
<span style="position:absolute;left:1793.90px;top:193.00px;font:normal 400 18.60px/18.60px 'Liberation Sans',sans-serif;color:#ffffff;white-space:pre;transform-origin:0 0;transform:scaleX(1.0079);">Find &amp;</span>
<span style="position:absolute;left:1789.85px;top:217.00px;font:normal 400 18.60px/18.60px 'Liberation Sans',sans-serif;color:#ffffff;white-space:pre;transform-origin:0 0;transform:scaleX(0.8938);">Select</span>
<span style="position:absolute;left:1885.00px;top:193.00px;font:normal 400 18.60px/18.60px 'Liberation Sans',sans-serif;color:#ffffff;white-space:pre;transform-origin:0 0;transform:scaleX(0.9951);">Add-ins</span>
<span style="position:absolute;left:1980.00px;top:193.00px;font:normal 400 18.60px/18.60px 'Liberation Sans',sans-serif;color:#ffffff;white-space:pre;transform-origin:0 0;transform:scaleX(0.9328);">Analyze</span>
<span style="position:absolute;left:1990.76px;top:217.00px;font:normal 400 18.60px/18.60px 'Liberation Sans',sans-serif;color:#ffffff;white-space:pre;transform-origin:0 0;transform:scaleX(0.9667);">Data</span>
<span style="position:absolute;left:2294.17px;top:157.00px;font:normal 700 48.00px/48.00px 'Liberation Sans',sans-serif;color:#ffffff;white-space:pre;transform-origin:0 0;transform:scaleX(0.7149);-webkit-text-stroke:2.00px #ffffff;">F</span>
<span style="position:absolute;left:2318.64px;top:157.00px;font:normal 700 48.00px/48.00px 'Liberation Sans',sans-serif;color:#ffffff;white-space:pre;transform-origin:0 0;transform:scaleX(0.9483);-webkit-text-stroke:2.00px #ffffff;">I</span>
<span style="position:absolute;left:2334.27px;top:157.00px;font:normal 700 48.00px/48.00px 'Liberation Sans',sans-serif;color:#ffffff;white-space:pre;transform-origin:0 0;transform:scaleX(0.8757);-webkit-text-stroke:2.00px #ffffff;">N</span>
<span style="position:absolute;left:2367.67px;top:157.00px;font:normal 700 48.00px/48.00px 'Liberation Sans',sans-serif;color:#ffffff;white-space:pre;transform-origin:0 0;transform:scaleX(1.0982);-webkit-text-stroke:2.00px #ffffff;">M</span>
<span style="position:absolute;left:2413.01px;top:157.00px;font:normal 700 48.00px/48.00px 'Liberation Sans',sans-serif;color:#ffffff;white-space:pre;transform-origin:0 0;transform:scaleX(0.9862);-webkit-text-stroke:2.00px #ffffff;">O</span>
<span style="position:absolute;left:2450.56px;top:157.00px;font:normal 700 48.00px/48.00px 'Liberation Sans',sans-serif;color:#ffffff;white-space:pre;transform-origin:0 0;transform:scaleX(0.9112);-webkit-text-stroke:2.00px #ffffff;">D</span>
<span style="position:absolute;left:2487.68px;top:157.00px;font:normal 700 48.00px/48.00px 'Liberation Sans',sans-serif;color:#ffffff;white-space:pre;transform-origin:0 0;transform:scaleX(0.6158);-webkit-text-stroke:2.00px #ffffff;">E</span>
<span style="position:absolute;left:2512.84px;top:157.00px;font:normal 700 48.00px/48.00px 'Liberation Sans',sans-serif;color:#ffffff;white-space:pre;transform-origin:0 0;transform:scaleX(0.6270);-webkit-text-stroke:2.00px #ffffff;">L</span>
<span style="position:absolute;left:2534.30px;top:157.00px;font:normal 700 48.00px/48.00px 'Liberation Sans',sans-serif;color:#ffffff;white-space:pre;transform-origin:0 0;transform:scaleX(0.8333);-webkit-text-stroke:2.00px #ffffff;">S</span>
<span style="position:absolute;left:2565.03px;top:157.00px;font:normal 700 48.00px/48.00px 'Liberation Sans',sans-serif;color:#ffffff;white-space:pre;transform-origin:0 0;transform:scaleX(0.6311);-webkit-text-stroke:2.00px #ffffff;">L</span>
<span style="position:absolute;left:2586.60px;top:157.00px;font:normal 700 48.00px/48.00px 'Liberation Sans',sans-serif;color:#ffffff;white-space:pre;transform-origin:0 0;-webkit-text-stroke:2.00px #ffffff;">A</span>
<span style="position:absolute;left:2625.13px;top:157.00px;font:normal 700 48.00px/48.00px 'Liberation Sans',sans-serif;color:#ffffff;white-space:pre;transform-origin:0 0;transform:scaleX(0.7923);-webkit-text-stroke:2.00px #ffffff;">B</span>
<svg width="2902" height="300"><path d="M2431.4 159.4v20.6" stroke="#fff" stroke-width="8.9" stroke-linecap="round"/></svg>
<span style="position:absolute;left:2294.62px;top:207.00px;font:normal 400 35.00px/35.00px 'Liberation Sans',sans-serif;color:#ffffff;white-space:pre;transform-origin:0 0;transform:scaleX(1.1178);">T</span>
<span style="position:absolute;left:2336.50px;top:212.00px;font:normal 400 29.50px/29.50px 'Liberation Sans',sans-serif;color:#ffffff;white-space:pre;transform-origin:0 0;transform:scaleX(1.6084);">e</span>
<span style="position:absolute;left:2379.53px;top:212.00px;font:normal 400 29.50px/29.50px 'Liberation Sans',sans-serif;color:#ffffff;white-space:pre;transform-origin:0 0;transform:scaleX(1.4425);">m</span>
<span style="position:absolute;left:2435.94px;top:212.00px;font:normal 400 29.50px/29.50px 'Liberation Sans',sans-serif;color:#ffffff;white-space:pre;transform-origin:0 0;transform:scaleX(1.6497);">p</span>
<span style="position:absolute;left:2479.94px;top:207.00px;font:normal 400 35.00px/35.00px 'Liberation Sans',sans-serif;color:#ffffff;white-space:pre;transform-origin:0 0;transform:scaleX(1.3016);">l</span>
<span style="position:absolute;left:2510.46px;top:212.00px;font:normal 400 29.50px/29.50px 'Liberation Sans',sans-serif;color:#ffffff;white-space:pre;transform-origin:0 0;transform:scaleX(1.3888);">a</span>
<span style="position:absolute;left:2555.43px;top:209.00px;font:normal 400 33.00px/33.00px 'Liberation Sans',sans-serif;color:#ffffff;white-space:pre;transform-origin:0 0;transform:scaleX(1.1527);">t</span>
<span style="position:absolute;left:2589.58px;top:212.00px;font:normal 400 29.50px/29.50px 'Liberation Sans',sans-serif;color:#ffffff;white-space:pre;transform-origin:0 0;transform:scaleX(1.5435);">e</span>
<span style="position:absolute;left:2632.34px;top:212.00px;font:normal 400 29.50px/29.50px 'Liberation Sans',sans-serif;color:#ffffff;white-space:pre;transform-origin:0 0;transform:scaleX(1.4183);">s</span>
<div style="position:absolute;left:11.0px;top:278.0px;width:2850.0px;height:27.0px;background:#0b0b0b;"></div>
<div style="position:absolute;left:11.0px;top:305.0px;width:42.0px;height:1365.0px;background:#0b0b0b;"></div>
<div style="position:absolute;left:53.0px;top:305.0px;width:2807.2px;height:1365.2px;background:#fff;"></div>
<div style="position:absolute;left:53.0px;top:278.0px;width:29.4px;height:26.5px;background:#666;border-left:1px solid #999;border-right:1px solid #999;box-sizing:border-box;"></div>
<div style="position:absolute;left:11.0px;top:305.0px;width:41.0px;height:46.0px;background:#666;border-top:1px solid #b5b5b5;box-sizing:border-box;"></div>
<svg width="2902" height="1762"><path d="M50.400 282.400v19.600h-20.400z" fill="#6a6a6a"/><path d="M82.5 278.500V305" stroke="#505050" stroke-width="1"/><path d="M126.5 278.500V305" stroke="#505050" stroke-width="1"/><path d="M171.5 278.500V305" stroke="#505050" stroke-width="1"/><path d="M216.5 278.500V305" stroke="#505050" stroke-width="1"/><path d="M261.5 278.500V305" stroke="#505050" stroke-width="1"/><path d="M306.5 278.500V305" stroke="#505050" stroke-width="1"/><path d="M351.5 278.500V305" stroke="#505050" stroke-width="1"/><path d="M396.5 278.500V305" stroke="#505050" stroke-width="1"/><path d="M600.5 278.500V305" stroke="#505050" stroke-width="1"/><path d="M804.5 278.500V305" stroke="#505050" stroke-width="1"/><path d="M1008.5 278.500V305" stroke="#505050" stroke-width="1"/><path d="M1212.5 278.500V305" stroke="#505050" stroke-width="1"/><path d="M1416.5 278.500V305" stroke="#505050" stroke-width="1"/><path d="M1620.5 278.500V305" stroke="#505050" stroke-width="1"/><path d="M1824.5 278.500V305" stroke="#505050" stroke-width="1"/><path d="M1877.5 278.500V305" stroke="#505050" stroke-width="1"/><path d="M2038.5 278.500V305" stroke="#505050" stroke-width="1"/><path d="M2199.5 278.500V305" stroke="#505050" stroke-width="1"/><path d="M2360.5 278.500V305" stroke="#505050" stroke-width="1"/><path d="M2521.5 278.500V305" stroke="#505050" stroke-width="1"/><path d="M2682.5 278.500V305" stroke="#505050" stroke-width="1"/><path d="M2823.5 278.500V305" stroke="#505050" stroke-width="1"/><path d="M2855.5 278.500V305" stroke="#505050" stroke-width="1"/><path d="M53.5 280V305" stroke="#444" stroke-width="1"/><path d="M11 351.0H53" stroke="#555" stroke-width="1"/><path d="M11 391.4H53" stroke="#555" stroke-width="1"/><path d="M11 432.4H53" stroke="#555" stroke-width="1"/><path d="M11 461.4H53" stroke="#555" stroke-width="1"/><path d="M11 503.6H53" stroke="#555" stroke-width="1"/><path d="M11 538.6H53" stroke="#555" stroke-width="1"/><path d="M11 566.8H53" stroke="#555" stroke-width="1"/><path d="M11 602.2H53" stroke="#555" stroke-width="1"/><path d="M11 631.2H53" stroke="#555" stroke-width="1"/><path d="M11 660.3H53" stroke="#555" stroke-width="1"/><path d="M11 689.4H53" stroke="#555" stroke-width="1"/><path d="M11 718.4H53" stroke="#555" stroke-width="1"/><path d="M11 747.5H53" stroke="#555" stroke-width="1"/><path d="M11 769.0H53" stroke="#555" stroke-width="1"/><path d="M11 811.2H53" stroke="#555" stroke-width="1"/><path d="M11 840.2H53" stroke="#555" stroke-width="1"/><path d="M11 869.2H53" stroke="#555" stroke-width="1"/><path d="M11 898.3H53" stroke="#555" stroke-width="1"/><path d="M11 927.3H53" stroke="#555" stroke-width="1"/><path d="M11 956.3H53" stroke="#555" stroke-width="1"/><path d="M11 985.3H53" stroke="#555" stroke-width="1"/><path d="M11 1014.3H53" stroke="#555" stroke-width="1"/><path d="M11 1043.4H53" stroke="#555" stroke-width="1"/><path d="M11 1072.4H53" stroke="#555" stroke-width="1"/><path d="M11 1101.4H53" stroke="#555" stroke-width="1"/><path d="M11 1130.4H53" stroke="#555" stroke-width="1"/><path d="M11 1159.4H53" stroke="#555" stroke-width="1"/><path d="M11 1188.5H53" stroke="#555" stroke-width="1"/><path d="M11 1217.5H53" stroke="#555" stroke-width="1"/><path d="M11 1246.5H53" stroke="#555" stroke-width="1"/><path d="M11 1275.5H53" stroke="#555" stroke-width="1"/><path d="M11 1304.5H53" stroke="#555" stroke-width="1"/><path d="M11 1333.6H53" stroke="#555" stroke-width="1"/><path d="M11 1362.6H53" stroke="#555" stroke-width="1"/><path d="M11 1391.6H53" stroke="#555" stroke-width="1"/><path d="M11 1420.6H53" stroke="#555" stroke-width="1"/><path d="M11 1449.6H53" stroke="#555" stroke-width="1"/><path d="M11 1478.7H53" stroke="#555" stroke-width="1"/><path d="M11 1507.7H53" stroke="#555" stroke-width="1"/><path d="M11 1536.7H53" stroke="#555" stroke-width="1"/><path d="M11 1579.2H53" stroke="#555" stroke-width="1"/><path d="M11 1608.3H53" stroke="#555" stroke-width="1"/><path d="M11 1637.3H53" stroke="#555" stroke-width="1"/><path d="M11 1669.0H53" stroke="#555" stroke-width="1"/><path d="M11 305.500H53M11 567H53" stroke="#555" stroke-width="1"/><path d="M53 461.500H2860" stroke="#a8a8a8" stroke-width="1"/><path d="M53 351V305.500H82.500" fill="none" stroke="#1e7a48" stroke-width="2.2"/></svg>
<span style="position:absolute;left:60.19px;top:282.00px;font:normal 400 22.60px/22.60px 'Liberation Sans',sans-serif;color:#e8e8e8;white-space:pre;transform-origin:0 0;">A</span>
<span style="position:absolute;left:96.65px;top:282.00px;font:normal 400 22.60px/22.60px 'Liberation Sans',sans-serif;color:#e8e8e8;white-space:pre;transform-origin:0 0;">B</span>
<span style="position:absolute;left:140.74px;top:282.00px;font:normal 400 22.60px/22.60px 'Liberation Sans',sans-serif;color:#e8e8e8;white-space:pre;transform-origin:0 0;">C</span>
<span style="position:absolute;left:185.37px;top:282.00px;font:normal 400 22.60px/22.60px 'Liberation Sans',sans-serif;color:#e8e8e8;white-space:pre;transform-origin:0 0;">D</span>
<span style="position:absolute;left:230.83px;top:282.00px;font:normal 400 22.60px/22.60px 'Liberation Sans',sans-serif;color:#e8e8e8;white-space:pre;transform-origin:0 0;">E</span>
<span style="position:absolute;left:276.46px;top:282.00px;font:normal 400 22.60px/22.60px 'Liberation Sans',sans-serif;color:#e8e8e8;white-space:pre;transform-origin:0 0;">F</span>
<span style="position:absolute;left:320.22px;top:282.00px;font:normal 400 22.60px/22.60px 'Liberation Sans',sans-serif;color:#e8e8e8;white-space:pre;transform-origin:0 0;">G</span>
<span style="position:absolute;left:365.51px;top:282.00px;font:normal 400 22.60px/22.60px 'Liberation Sans',sans-serif;color:#e8e8e8;white-space:pre;transform-origin:0 0;">H</span>
<span style="position:absolute;left:495.09px;top:282.00px;font:normal 400 22.60px/22.60px 'Liberation Sans',sans-serif;color:#e8e8e8;white-space:pre;transform-origin:0 0;">I</span>
<span style="position:absolute;left:697.38px;top:282.00px;font:normal 400 22.60px/22.60px 'Liberation Sans',sans-serif;color:#e8e8e8;white-space:pre;transform-origin:0 0;">J</span>
<span style="position:absolute;left:898.09px;top:282.00px;font:normal 400 22.60px/22.60px 'Liberation Sans',sans-serif;color:#e8e8e8;white-space:pre;transform-origin:0 0;">K</span>
<span style="position:absolute;left:1103.61px;top:282.00px;font:normal 400 22.60px/22.60px 'Liberation Sans',sans-serif;color:#e8e8e8;white-space:pre;transform-origin:0 0;">L</span>
<span style="position:absolute;left:1305.22px;top:282.00px;font:normal 400 22.60px/22.60px 'Liberation Sans',sans-serif;color:#e8e8e8;white-space:pre;transform-origin:0 0;">M</span>
<span style="position:absolute;left:1510.41px;top:282.00px;font:normal 400 22.60px/22.60px 'Liberation Sans',sans-serif;color:#e8e8e8;white-space:pre;transform-origin:0 0;">N</span>
<span style="position:absolute;left:1713.84px;top:282.00px;font:normal 400 22.60px/22.60px 'Liberation Sans',sans-serif;color:#e8e8e8;white-space:pre;transform-origin:0 0;">O</span>
<span style="position:absolute;left:1843.45px;top:282.00px;font:normal 400 22.60px/22.60px 'Liberation Sans',sans-serif;color:#e8e8e8;white-space:pre;transform-origin:0 0;">P</span>
<span style="position:absolute;left:1949.44px;top:282.00px;font:normal 400 22.60px/22.60px 'Liberation Sans',sans-serif;color:#e8e8e8;white-space:pre;transform-origin:0 0;">Q</span>
<span style="position:absolute;left:2110.47px;top:282.00px;font:normal 400 22.60px/22.60px 'Liberation Sans',sans-serif;color:#e8e8e8;white-space:pre;transform-origin:0 0;">R</span>
<span style="position:absolute;left:2272.39px;top:282.00px;font:normal 400 22.60px/22.60px 'Liberation Sans',sans-serif;color:#e8e8e8;white-space:pre;transform-origin:0 0;">S</span>
<span style="position:absolute;left:2433.91px;top:282.00px;font:normal 400 22.60px/22.60px 'Liberation Sans',sans-serif;color:#e8e8e8;white-space:pre;transform-origin:0 0;">T</span>
<span style="position:absolute;left:2593.51px;top:282.00px;font:normal 400 22.60px/22.60px 'Liberation Sans',sans-serif;color:#e8e8e8;white-space:pre;transform-origin:0 0;">U</span>
<span style="position:absolute;left:2745.14px;top:282.00px;font:normal 400 22.60px/22.60px 'Liberation Sans',sans-serif;color:#e8e8e8;white-space:pre;transform-origin:0 0;">V</span>
<span style="position:absolute;left:2828.42px;top:282.00px;font:normal 400 22.60px/22.60px 'Liberation Sans',sans-serif;color:#e8e8e8;white-space:pre;transform-origin:0 0;">W</span>
<span style="position:absolute;left:25.74px;top:328.00px;font:normal 400 21.40px/21.40px 'Liberation Sans',sans-serif;color:#e8e8e8;white-space:pre;transform-origin:0 0;">1</span>
<span style="position:absolute;left:26.06px;top:369.00px;font:normal 400 21.40px/21.40px 'Liberation Sans',sans-serif;color:#e8e8e8;white-space:pre;transform-origin:0 0;">2</span>
<span style="position:absolute;left:26.06px;top:410.00px;font:normal 400 21.40px/21.40px 'Liberation Sans',sans-serif;color:#e8e8e8;white-space:pre;transform-origin:0 0;">3</span>
<span style="position:absolute;left:26.17px;top:439.00px;font:normal 400 21.40px/21.40px 'Liberation Sans',sans-serif;color:#e8e8e8;white-space:pre;transform-origin:0 0;">4</span>
<span style="position:absolute;left:26.06px;top:481.00px;font:normal 400 21.40px/21.40px 'Liberation Sans',sans-serif;color:#e8e8e8;white-space:pre;transform-origin:0 0;">5</span>
<span style="position:absolute;left:25.95px;top:516.00px;font:normal 400 21.40px/21.40px 'Liberation Sans',sans-serif;color:#e8e8e8;white-space:pre;transform-origin:0 0;">6</span>
<span style="position:absolute;left:26.06px;top:544.00px;font:normal 400 21.40px/21.40px 'Liberation Sans',sans-serif;color:#e8e8e8;white-space:pre;transform-origin:0 0;">7</span>
<span style="position:absolute;left:26.06px;top:579.00px;font:normal 400 21.40px/21.40px 'Liberation Sans',sans-serif;color:#e8e8e8;white-space:pre;transform-origin:0 0;">9</span>
<span style="position:absolute;left:19.70px;top:608.00px;font:normal 400 21.40px/21.40px 'Liberation Sans',sans-serif;color:#e8e8e8;white-space:pre;transform-origin:0 0;">10</span>
<span style="position:absolute;left:20.60px;top:638.00px;font:normal 400 21.40px/21.40px 'Liberation Sans',sans-serif;color:#e8e8e8;white-space:pre;transform-origin:0 0;">11</span>
<span style="position:absolute;left:19.86px;top:667.00px;font:normal 400 21.40px/21.40px 'Liberation Sans',sans-serif;color:#e8e8e8;white-space:pre;transform-origin:0 0;">12</span>
<span style="position:absolute;left:19.75px;top:696.00px;font:normal 400 21.40px/21.40px 'Liberation Sans',sans-serif;color:#e8e8e8;white-space:pre;transform-origin:0 0;">13</span>
<span style="position:absolute;left:19.64px;top:725.00px;font:normal 400 21.40px/21.40px 'Liberation Sans',sans-serif;color:#e8e8e8;white-space:pre;transform-origin:0 0;">14</span>
<span style="position:absolute;left:19.75px;top:746.00px;font:normal 400 21.40px/21.40px 'Liberation Sans',sans-serif;color:#e8e8e8;white-space:pre;transform-origin:0 0;">15</span>
<span style="position:absolute;left:19.75px;top:788.00px;font:normal 400 21.40px/21.40px 'Liberation Sans',sans-serif;color:#e8e8e8;white-space:pre;transform-origin:0 0;">16</span>
<span style="position:absolute;left:19.86px;top:817.00px;font:normal 400 21.40px/21.40px 'Liberation Sans',sans-serif;color:#e8e8e8;white-space:pre;transform-origin:0 0;">17</span>
<span style="position:absolute;left:19.75px;top:846.00px;font:normal 400 21.40px/21.40px 'Liberation Sans',sans-serif;color:#e8e8e8;white-space:pre;transform-origin:0 0;">18</span>
<span style="position:absolute;left:19.80px;top:875.00px;font:normal 400 21.40px/21.40px 'Liberation Sans',sans-serif;color:#e8e8e8;white-space:pre;transform-origin:0 0;">19</span>
<span style="position:absolute;left:19.96px;top:904.00px;font:normal 400 21.40px/21.40px 'Liberation Sans',sans-serif;color:#e8e8e8;white-space:pre;transform-origin:0 0;">20</span>
<span style="position:absolute;left:20.07px;top:934.00px;font:normal 400 21.40px/21.40px 'Liberation Sans',sans-serif;color:#e8e8e8;white-space:pre;transform-origin:0 0;">21</span>
<span style="position:absolute;left:20.12px;top:963.00px;font:normal 400 21.40px/21.40px 'Liberation Sans',sans-serif;color:#e8e8e8;white-space:pre;transform-origin:0 0;">22</span>
<span style="position:absolute;left:20.02px;top:992.00px;font:normal 400 21.40px/21.40px 'Liberation Sans',sans-serif;color:#e8e8e8;white-space:pre;transform-origin:0 0;">23</span>
<span style="position:absolute;left:19.91px;top:1021.00px;font:normal 400 21.40px/21.40px 'Liberation Sans',sans-serif;color:#e8e8e8;white-space:pre;transform-origin:0 0;">24</span>
<span style="position:absolute;left:20.02px;top:1050.00px;font:normal 400 21.40px/21.40px 'Liberation Sans',sans-serif;color:#e8e8e8;white-space:pre;transform-origin:0 0;">25</span>
<span style="position:absolute;left:20.02px;top:1079.00px;font:normal 400 21.40px/21.40px 'Liberation Sans',sans-serif;color:#e8e8e8;white-space:pre;transform-origin:0 0;">26</span>
<span style="position:absolute;left:20.12px;top:1108.00px;font:normal 400 21.40px/21.40px 'Liberation Sans',sans-serif;color:#e8e8e8;white-space:pre;transform-origin:0 0;">27</span>
<span style="position:absolute;left:20.02px;top:1137.00px;font:normal 400 21.40px/21.40px 'Liberation Sans',sans-serif;color:#e8e8e8;white-space:pre;transform-origin:0 0;">28</span>
<span style="position:absolute;left:20.07px;top:1166.00px;font:normal 400 21.40px/21.40px 'Liberation Sans',sans-serif;color:#e8e8e8;white-space:pre;transform-origin:0 0;">29</span>
<span style="position:absolute;left:20.07px;top:1195.00px;font:normal 400 21.40px/21.40px 'Liberation Sans',sans-serif;color:#e8e8e8;white-space:pre;transform-origin:0 0;">30</span>
<span style="position:absolute;left:20.18px;top:1224.00px;font:normal 400 21.40px/21.40px 'Liberation Sans',sans-serif;color:#e8e8e8;white-space:pre;transform-origin:0 0;">31</span>
<span style="position:absolute;left:20.23px;top:1253.00px;font:normal 400 21.40px/21.40px 'Liberation Sans',sans-serif;color:#e8e8e8;white-space:pre;transform-origin:0 0;">32</span>
<span style="position:absolute;left:20.12px;top:1282.00px;font:normal 400 21.40px/21.40px 'Liberation Sans',sans-serif;color:#e8e8e8;white-space:pre;transform-origin:0 0;">33</span>
<span style="position:absolute;left:20.02px;top:1311.00px;font:normal 400 21.40px/21.40px 'Liberation Sans',sans-serif;color:#e8e8e8;white-space:pre;transform-origin:0 0;">34</span>
<span style="position:absolute;left:20.12px;top:1340.00px;font:normal 400 21.40px/21.40px 'Liberation Sans',sans-serif;color:#e8e8e8;white-space:pre;transform-origin:0 0;">35</span>
<span style="position:absolute;left:20.12px;top:1369.00px;font:normal 400 21.40px/21.40px 'Liberation Sans',sans-serif;color:#e8e8e8;white-space:pre;transform-origin:0 0;">36</span>
<span style="position:absolute;left:20.23px;top:1398.00px;font:normal 400 21.40px/21.40px 'Liberation Sans',sans-serif;color:#e8e8e8;white-space:pre;transform-origin:0 0;">37</span>
<span style="position:absolute;left:20.12px;top:1427.00px;font:normal 400 21.40px/21.40px 'Liberation Sans',sans-serif;color:#e8e8e8;white-space:pre;transform-origin:0 0;">38</span>
<span style="position:absolute;left:20.18px;top:1456.00px;font:normal 400 21.40px/21.40px 'Liberation Sans',sans-serif;color:#e8e8e8;white-space:pre;transform-origin:0 0;">39</span>
<span style="position:absolute;left:20.28px;top:1485.00px;font:normal 400 21.40px/21.40px 'Liberation Sans',sans-serif;color:#e8e8e8;white-space:pre;transform-origin:0 0;">40</span>
<span style="position:absolute;left:20.39px;top:1514.00px;font:normal 400 21.40px/21.40px 'Liberation Sans',sans-serif;color:#e8e8e8;white-space:pre;transform-origin:0 0;">41</span>
<span style="position:absolute;left:20.44px;top:1556.00px;font:normal 400 21.40px/21.40px 'Liberation Sans',sans-serif;color:#e8e8e8;white-space:pre;transform-origin:0 0;">42</span>
<span style="position:absolute;left:20.34px;top:1586.00px;font:normal 400 21.40px/21.40px 'Liberation Sans',sans-serif;color:#e8e8e8;white-space:pre;transform-origin:0 0;">43</span>
<span style="position:absolute;left:20.23px;top:1615.00px;font:normal 400 21.40px/21.40px 'Liberation Sans',sans-serif;color:#e8e8e8;white-space:pre;transform-origin:0 0;">44</span>
<span style="position:absolute;left:20.34px;top:1646.00px;font:normal 400 21.40px/21.40px 'Liberation Sans',sans-serif;color:#e8e8e8;white-space:pre;transform-origin:0 0;">45</span>
<span style="position:absolute;left:88.49px;top:311.00px;font:normal 700 38.90px/38.90px 'Liberation Sans',sans-serif;color:#262626;white-space:pre;transform-origin:0 0;transform:scaleX(1.0567);-webkit-text-stroke:0.90px #262626;">Top Revenue</span>
<span style="position:absolute;left:87.52px;top:357.00px;font:normal 700 32.60px/32.60px 'Liberation Sans',sans-serif;color:#000;white-space:pre;transform-origin:0 0;transform:scaleX(1.0783);-webkit-text-stroke:0.80px #000;">ABC Company Inc.</span>
<span style="position:absolute;left:86.28px;top:402.00px;font:normal 700 21.30px/21.30px 'Liberation Sans',sans-serif;color:#1a73e8;white-space:pre;transform-origin:0 0;transform:scaleX(1.0768);-webkit-text-stroke:0.50px #1a73e8;">Go to Table of Contents</span>
<div style="position:absolute;left:86.5px;top:422.3px;width:257.5px;height:2.2px;background:#1a73e8;"></div>
<div style="position:absolute;left:82.0px;top:462.0px;width:2741.2px;height:41.6px;background:#4c50d2;"></div>
<div style="position:absolute;left:600.3px;top:502.6px;width:1020.1px;height:1.0px;background:#fff;"></div>
<span style="position:absolute;left:938.93px;top:465.00px;font:normal 700 35.20px/35.20px 'Liberation Sans',sans-serif;color:#fff;white-space:pre;transform-origin:0 0;transform:scaleX(1.0494);-webkit-text-stroke:0.80px #fff;">Top 5 Revenue Streams ($'000) - 5 years to December 2030</span>
<div style="position:absolute;left:82.0px;top:539.0px;width:1538.0px;height:28.0px;background:#6c70e8;"></div>
<div style="position:absolute;left:599.8px;top:539.0px;width:1.3px;height:28.0px;background:#fff;"></div>
<div style="position:absolute;left:803.9px;top:539.0px;width:1.3px;height:28.0px;background:#fff;"></div>
<div style="position:absolute;left:1007.9px;top:539.0px;width:1.3px;height:28.0px;background:#fff;"></div>
<div style="position:absolute;left:1212.0px;top:539.0px;width:1.3px;height:28.0px;background:#fff;"></div>
<div style="position:absolute;left:1416.2px;top:539.0px;width:1.3px;height:28.0px;background:#fff;"></div>
<div style="position:absolute;left:1877.8px;top:539.0px;width:804.3px;height:28.0px;background:#6c70e8;"></div>
<div style="position:absolute;left:2038.1px;top:539.0px;width:1.3px;height:28.0px;background:#fff;"></div>
<div style="position:absolute;left:2198.9px;top:539.0px;width:1.3px;height:28.0px;background:#fff;"></div>
<div style="position:absolute;left:2359.9px;top:539.0px;width:1.3px;height:28.0px;background:#fff;"></div>
<div style="position:absolute;left:2520.7px;top:539.0px;width:1.3px;height:28.0px;background:#fff;"></div>
<span style="position:absolute;left:96.54px;top:543.00px;font:normal 700 22.60px/22.60px 'Liberation Sans',sans-serif;color:#fff;white-space:pre;transform-origin:0 0;transform:scaleX(1.0256);-webkit-text-stroke:0.50px #fff;">Year Ending</span>
<span style="position:absolute;left:675.78px;top:543.00px;font:normal 700 22.00px/22.00px 'Liberation Sans',sans-serif;color:#fff;white-space:pre;transform-origin:0 0;transform:scaleX(1.1263);-webkit-text-stroke:0.50px #fff;">2026</span>
<span style="position:absolute;left:1930.63px;top:543.00px;font:normal 700 22.00px/22.00px 'Liberation Sans',sans-serif;color:#fff;white-space:pre;transform-origin:0 0;transform:scaleX(1.1263);-webkit-text-stroke:0.50px #fff;">2026</span>
<span style="position:absolute;left:879.88px;top:543.00px;font:normal 700 22.00px/22.00px 'Liberation Sans',sans-serif;color:#fff;white-space:pre;transform-origin:0 0;transform:scaleX(1.1290);-webkit-text-stroke:0.50px #fff;">2027</span>
<span style="position:absolute;left:2091.48px;top:543.00px;font:normal 700 22.00px/22.00px 'Liberation Sans',sans-serif;color:#fff;white-space:pre;transform-origin:0 0;transform:scaleX(1.1290);-webkit-text-stroke:0.50px #fff;">2027</span>
<span style="position:absolute;left:1083.98px;top:543.00px;font:normal 700 22.00px/22.00px 'Liberation Sans',sans-serif;color:#fff;white-space:pre;transform-origin:0 0;transform:scaleX(1.1237);-webkit-text-stroke:0.50px #fff;">2028</span>
<span style="position:absolute;left:2252.33px;top:543.00px;font:normal 700 22.00px/22.00px 'Liberation Sans',sans-serif;color:#fff;white-space:pre;transform-origin:0 0;transform:scaleX(1.1237);-webkit-text-stroke:0.50px #fff;">2028</span>
<span style="position:absolute;left:1288.08px;top:543.00px;font:normal 700 22.00px/22.00px 'Liberation Sans',sans-serif;color:#fff;white-space:pre;transform-origin:0 0;transform:scaleX(1.1263);-webkit-text-stroke:0.50px #fff;">2029</span>
<span style="position:absolute;left:2413.18px;top:543.00px;font:normal 700 22.00px/22.00px 'Liberation Sans',sans-serif;color:#fff;white-space:pre;transform-origin:0 0;transform:scaleX(1.1263);-webkit-text-stroke:0.50px #fff;">2029</span>
<span style="position:absolute;left:1492.18px;top:543.00px;font:normal 700 22.00px/22.00px 'Liberation Sans',sans-serif;color:#fff;white-space:pre;transform-origin:0 0;transform:scaleX(1.1290);-webkit-text-stroke:0.50px #fff;">2030</span>
<span style="position:absolute;left:2574.03px;top:543.00px;font:normal 700 22.00px/22.00px 'Liberation Sans',sans-serif;color:#fff;white-space:pre;transform-origin:0 0;transform:scaleX(1.1290);-webkit-text-stroke:0.50px #fff;">2030</span>
<span style="position:absolute;left:84.53px;top:578.00px;font:normal 400 22.00px/22.00px 'Liberation Sans',sans-serif;color:#000;white-space:pre;transform-origin:0 0;transform:scaleX(0.9836);">Standard King</span>
<span style="position:absolute;left:725.77px;top:578.00px;font:normal 400 22.00px/22.00px 'Liberation Sans',sans-serif;color:#000;white-space:pre;transform-origin:0 0;transform:scaleX(0.9879);">14,231</span>
<span style="position:absolute;left:1960.43px;top:578.00px;font:italic 400 22.00px/22.00px 'Liberation Sans',sans-serif;color:#000;white-space:pre;transform-origin:0 0;transform:scaleX(1.0357);">35.6%</span>
<span style="position:absolute;left:929.87px;top:578.00px;font:normal 400 22.00px/22.00px 'Liberation Sans',sans-serif;color:#000;white-space:pre;transform-origin:0 0;transform:scaleX(0.9896);">16,037</span>
<span style="position:absolute;left:2121.28px;top:578.00px;font:italic 400 22.00px/22.00px 'Liberation Sans',sans-serif;color:#000;white-space:pre;transform-origin:0 0;transform:scaleX(1.0357);">35.1%</span>
<span style="position:absolute;left:1134.67px;top:578.00px;font:normal 400 22.00px/22.00px 'Liberation Sans',sans-serif;color:#000;white-space:pre;transform-origin:0 0;transform:scaleX(0.9863);">18,016</span>
<span style="position:absolute;left:2282.13px;top:578.00px;font:italic 400 22.00px/22.00px 'Liberation Sans',sans-serif;color:#000;white-space:pre;transform-origin:0 0;transform:scaleX(1.0357);">34.7%</span>
<span style="position:absolute;left:1338.78px;top:578.00px;font:normal 400 22.00px/22.00px 'Liberation Sans',sans-serif;color:#000;white-space:pre;transform-origin:0 0;transform:scaleX(0.9829);">19,954</span>
<span style="position:absolute;left:2442.98px;top:578.00px;font:italic 400 22.00px/22.00px 'Liberation Sans',sans-serif;color:#000;white-space:pre;transform-origin:0 0;transform:scaleX(1.0357);">34.2%</span>
<span style="position:absolute;left:1543.42px;top:578.00px;font:normal 400 22.00px/22.00px 'Liberation Sans',sans-serif;color:#000;white-space:pre;transform-origin:0 0;transform:scaleX(0.9780);">21,338</span>
<span style="position:absolute;left:2603.83px;top:578.00px;font:italic 400 22.00px/22.00px 'Liberation Sans',sans-serif;color:#000;white-space:pre;transform-origin:0 0;transform:scaleX(1.0357);">33.8%</span>
<span style="position:absolute;left:83.75px;top:607.00px;font:normal 400 22.00px/22.00px 'Liberation Sans',sans-serif;color:#000;white-space:pre;transform-origin:0 0;transform:scaleX(0.9942);">Deluxe Queen</span>
<span style="position:absolute;left:725.73px;top:607.00px;font:normal 400 22.00px/22.00px 'Liberation Sans',sans-serif;color:#000;white-space:pre;transform-origin:0 0;transform:scaleX(1.0138);">11,521</span>
<span style="position:absolute;left:1961.11px;top:607.00px;font:italic 400 22.00px/22.00px 'Liberation Sans',sans-serif;color:#000;white-space:pre;transform-origin:0 0;transform:scaleX(1.0246);">28.8%</span>
<span style="position:absolute;left:930.57px;top:607.00px;font:normal 400 22.00px/22.00px 'Liberation Sans',sans-serif;color:#000;white-space:pre;transform-origin:0 0;transform:scaleX(0.9863);">13,166</span>
<span style="position:absolute;left:2121.96px;top:607.00px;font:italic 400 22.00px/22.00px 'Liberation Sans',sans-serif;color:#000;white-space:pre;transform-origin:0 0;transform:scaleX(1.0246);">28.8%</span>
<span style="position:absolute;left:1134.67px;top:607.00px;font:normal 400 22.00px/22.00px 'Liberation Sans',sans-serif;color:#000;white-space:pre;transform-origin:0 0;transform:scaleX(0.9863);">14,966</span>
<span style="position:absolute;left:2282.81px;top:607.00px;font:italic 400 22.00px/22.00px 'Liberation Sans',sans-serif;color:#000;white-space:pre;transform-origin:0 0;transform:scaleX(1.0246);">28.8%</span>
<span style="position:absolute;left:1338.07px;top:607.00px;font:normal 400 22.00px/22.00px 'Liberation Sans',sans-serif;color:#000;white-space:pre;transform-origin:0 0;transform:scaleX(0.9896);">16,767</span>
<span style="position:absolute;left:2443.66px;top:607.00px;font:italic 400 22.00px/22.00px 'Liberation Sans',sans-serif;color:#000;white-space:pre;transform-origin:0 0;transform:scaleX(1.0246);">28.7%</span>
<span style="position:absolute;left:1542.88px;top:607.00px;font:normal 400 22.00px/22.00px 'Liberation Sans',sans-serif;color:#000;white-space:pre;transform-origin:0 0;transform:scaleX(0.9846);">18,150</span>
<span style="position:absolute;left:2604.51px;top:607.00px;font:italic 400 22.00px/22.00px 'Liberation Sans',sans-serif;color:#000;white-space:pre;transform-origin:0 0;transform:scaleX(1.0246);">28.8%</span>
<span style="position:absolute;left:83.78px;top:636.00px;font:normal 400 22.00px/22.00px 'Liberation Sans',sans-serif;color:#000;white-space:pre;transform-origin:0 0;transform:scaleX(0.9796);">Executive Suite</span>
<span style="position:absolute;left:738.31px;top:636.00px;font:normal 400 22.00px/22.00px 'Liberation Sans',sans-serif;color:#000;white-space:pre;transform-origin:0 0;transform:scaleX(0.9880);">7,454</span>
<span style="position:absolute;left:1960.43px;top:636.00px;font:italic 400 22.00px/22.00px 'Liberation Sans',sans-serif;color:#000;white-space:pre;transform-origin:0 0;transform:scaleX(1.0357);">18.7%</span>
<span style="position:absolute;left:942.52px;top:636.00px;font:normal 400 22.00px/22.00px 'Liberation Sans',sans-serif;color:#000;white-space:pre;transform-origin:0 0;transform:scaleX(0.9941);">8,572</span>
<span style="position:absolute;left:2121.28px;top:636.00px;font:italic 400 22.00px/22.00px 'Liberation Sans',sans-serif;color:#000;white-space:pre;transform-origin:0 0;transform:scaleX(1.0357);">18.8%</span>
<span style="position:absolute;left:1146.62px;top:636.00px;font:normal 400 22.00px/22.00px 'Liberation Sans',sans-serif;color:#000;white-space:pre;transform-origin:0 0;transform:scaleX(0.9900);">9,865</span>
<span style="position:absolute;left:2282.13px;top:636.00px;font:italic 400 22.00px/22.00px 'Liberation Sans',sans-serif;color:#000;white-space:pre;transform-origin:0 0;transform:scaleX(1.0357);">19.0%</span>
<span style="position:absolute;left:1338.73px;top:636.00px;font:normal 400 22.00px/22.00px 'Liberation Sans',sans-serif;color:#000;white-space:pre;transform-origin:0 0;transform:scaleX(1.0120);">11,138</span>
<span style="position:absolute;left:2442.98px;top:636.00px;font:italic 400 22.00px/22.00px 'Liberation Sans',sans-serif;color:#000;white-space:pre;transform-origin:0 0;transform:scaleX(1.0357);">19.1%</span>
<span style="position:absolute;left:1542.88px;top:636.00px;font:normal 400 22.00px/22.00px 'Liberation Sans',sans-serif;color:#000;white-space:pre;transform-origin:0 0;transform:scaleX(0.9846);">12,080</span>
<span style="position:absolute;left:2603.83px;top:636.00px;font:italic 400 22.00px/22.00px 'Liberation Sans',sans-serif;color:#000;white-space:pre;transform-origin:0 0;transform:scaleX(1.0357);">19.1%</span>
<span style="position:absolute;left:83.78px;top:665.00px;font:normal 400 22.00px/22.00px 'Liberation Sans',sans-serif;color:#000;white-space:pre;transform-origin:0 0;transform:scaleX(0.9745);">Penthouse</span>
<span style="position:absolute;left:738.27px;top:665.00px;font:normal 400 22.00px/22.00px 'Liberation Sans',sans-serif;color:#000;white-space:pre;transform-origin:0 0;transform:scaleX(0.9839);">4,337</span>
<span style="position:absolute;left:1960.43px;top:665.00px;font:italic 400 22.00px/22.00px 'Liberation Sans',sans-serif;color:#000;white-space:pre;transform-origin:0 0;transform:scaleX(1.0357);">10.9%</span>
<span style="position:absolute;left:942.63px;top:665.00px;font:normal 400 22.00px/22.00px 'Liberation Sans',sans-serif;color:#000;white-space:pre;transform-origin:0 0;transform:scaleX(0.9880);">5,203</span>
<span style="position:absolute;left:2121.26px;top:665.00px;font:italic 400 22.00px/22.00px 'Liberation Sans',sans-serif;color:#000;white-space:pre;transform-origin:0 0;transform:scaleX(1.0645);">11.4%</span>
<span style="position:absolute;left:1146.51px;top:665.00px;font:normal 400 22.00px/22.00px 'Liberation Sans',sans-serif;color:#000;white-space:pre;transform-origin:0 0;transform:scaleX(0.9880);">6,084</span>
<span style="position:absolute;left:2282.11px;top:665.00px;font:italic 400 22.00px/22.00px 'Liberation Sans',sans-serif;color:#000;white-space:pre;transform-origin:0 0;transform:scaleX(1.0645);">11.7%</span>
<span style="position:absolute;left:1350.61px;top:665.00px;font:normal 400 22.00px/22.00px 'Liberation Sans',sans-serif;color:#000;white-space:pre;transform-origin:0 0;transform:scaleX(0.9921);">7,276</span>
<span style="position:absolute;left:2442.98px;top:665.00px;font:italic 400 22.00px/22.00px 'Liberation Sans',sans-serif;color:#000;white-space:pre;transform-origin:0 0;transform:scaleX(1.0357);">12.5%</span>
<span style="position:absolute;left:1554.82px;top:665.00px;font:normal 400 22.00px/22.00px 'Liberation Sans',sans-serif;color:#000;white-space:pre;transform-origin:0 0;transform:scaleX(0.9900);">8,068</span>
<span style="position:absolute;left:2603.83px;top:665.00px;font:italic 400 22.00px/22.00px 'Liberation Sans',sans-serif;color:#000;white-space:pre;transform-origin:0 0;transform:scaleX(1.0357);">12.8%</span>
<span style="position:absolute;left:84.52px;top:694.00px;font:normal 400 22.00px/22.00px 'Liberation Sans',sans-serif;color:#000;white-space:pre;transform-origin:0 0;transform:scaleX(0.9940);">Other Revenue</span>
<span style="position:absolute;left:738.31px;top:694.00px;font:normal 400 22.00px/22.00px 'Liberation Sans',sans-serif;color:#000;white-space:pre;transform-origin:0 0;transform:scaleX(0.9900);">2,400</span>
<span style="position:absolute;left:1971.71px;top:694.00px;font:italic 400 22.00px/22.00px 'Liberation Sans',sans-serif;color:#000;white-space:pre;transform-origin:0 0;transform:scaleX(1.0634);">6.0%</span>
<span style="position:absolute;left:942.41px;top:694.00px;font:normal 400 22.00px/22.00px 'Liberation Sans',sans-serif;color:#000;white-space:pre;transform-origin:0 0;transform:scaleX(0.9921);">2,736</span>
<span style="position:absolute;left:2132.56px;top:694.00px;font:italic 400 22.00px/22.00px 'Liberation Sans',sans-serif;color:#000;white-space:pre;transform-origin:0 0;transform:scaleX(1.0634);">6.0%</span>
<span style="position:absolute;left:1146.73px;top:694.00px;font:normal 400 22.00px/22.00px 'Liberation Sans',sans-serif;color:#000;white-space:pre;transform-origin:0 0;transform:scaleX(0.9921);">3,012</span>
<span style="position:absolute;left:2294.12px;top:694.00px;font:italic 400 22.00px/22.00px 'Liberation Sans',sans-serif;color:#000;white-space:pre;transform-origin:0 0;transform:scaleX(1.0490);">5.8%</span>
<span style="position:absolute;left:1350.83px;top:694.00px;font:normal 400 22.00px/22.00px 'Liberation Sans',sans-serif;color:#000;white-space:pre;transform-origin:0 0;transform:scaleX(0.9921);">3,252</span>
<span style="position:absolute;left:2454.97px;top:694.00px;font:italic 400 22.00px/22.00px 'Liberation Sans',sans-serif;color:#000;white-space:pre;transform-origin:0 0;transform:scaleX(1.0490);">5.6%</span>
<span style="position:absolute;left:1554.93px;top:694.00px;font:normal 400 22.00px/22.00px 'Liberation Sans',sans-serif;color:#000;white-space:pre;transform-origin:0 0;transform:scaleX(0.9859);">3,480</span>
<span style="position:absolute;left:2615.82px;top:694.00px;font:italic 400 22.00px/22.00px 'Liberation Sans',sans-serif;color:#000;white-space:pre;transform-origin:0 0;transform:scaleX(1.0490);">5.5%</span>
<div style="position:absolute;left:81.0px;top:718.3px;width:1539.6px;height:29.2px;background:#4ab3e8;"></div>
<div style="position:absolute;left:1877.0px;top:718.3px;width:806.0px;height:29.2px;background:#4ab3e8;"></div>
<span style="position:absolute;left:97.33px;top:720.00px;font:normal 700 27.20px/27.20px 'Liberation Sans',sans-serif;color:#fff;white-space:pre;transform-origin:0 0;transform:scaleX(0.9767);-webkit-text-stroke:0.60px #fff;">Total Revenue</span>
<span style="position:absolute;left:713.17px;top:722.00px;font:normal 700 23.00px/23.00px 'Liberation Sans',sans-serif;color:#fff;white-space:pre;transform-origin:0 0;transform:scaleX(1.1029);-webkit-text-stroke:0.50px #fff;">39,943</span>
<span style="position:absolute;left:1964.10px;top:722.00px;font:italic 700 23.00px/23.00px 'Liberation Sans',sans-serif;color:#fff;white-space:pre;transform-origin:0 0;transform:scaleX(1.1479);-webkit-text-stroke:0.50px #fff;">100%</span>
<span style="position:absolute;left:917.52px;top:722.00px;font:normal 700 23.00px/23.00px 'Liberation Sans',sans-serif;color:#fff;white-space:pre;transform-origin:0 0;transform:scaleX(1.0884);-webkit-text-stroke:0.50px #fff;">45,714</span>
<span style="position:absolute;left:2124.95px;top:722.00px;font:italic 700 23.00px/23.00px 'Liberation Sans',sans-serif;color:#fff;white-space:pre;transform-origin:0 0;transform:scaleX(1.1479);-webkit-text-stroke:0.50px #fff;">100%</span>
<span style="position:absolute;left:1121.24px;top:722.00px;font:normal 700 23.00px/23.00px 'Liberation Sans',sans-serif;color:#fff;white-space:pre;transform-origin:0 0;transform:scaleX(1.1047);-webkit-text-stroke:0.50px #fff;">51,943</span>
<span style="position:absolute;left:2285.80px;top:722.00px;font:italic 700 23.00px/23.00px 'Liberation Sans',sans-serif;color:#fff;white-space:pre;transform-origin:0 0;transform:scaleX(1.1479);-webkit-text-stroke:0.50px #fff;">100%</span>
<span style="position:absolute;left:1325.34px;top:722.00px;font:normal 700 23.00px/23.00px 'Liberation Sans',sans-serif;color:#fff;white-space:pre;transform-origin:0 0;transform:scaleX(1.1047);-webkit-text-stroke:0.50px #fff;">58,386</span>
<span style="position:absolute;left:2446.65px;top:722.00px;font:italic 700 23.00px/23.00px 'Liberation Sans',sans-serif;color:#fff;white-space:pre;transform-origin:0 0;transform:scaleX(1.1479);-webkit-text-stroke:0.50px #fff;">100%</span>
<span style="position:absolute;left:1529.29px;top:722.00px;font:normal 700 23.00px/23.00px 'Liberation Sans',sans-serif;color:#fff;white-space:pre;transform-origin:0 0;transform:scaleX(1.1292);-webkit-text-stroke:0.50px #fff;">63,116</span>
<span style="position:absolute;left:2607.50px;top:722.00px;font:italic 700 23.00px/23.00px 'Liberation Sans',sans-serif;color:#fff;white-space:pre;transform-origin:0 0;transform:scaleX(1.1479);-webkit-text-stroke:0.50px #fff;">100%</span>
<div style="position:absolute;left:82.0px;top:769.0px;width:2741.2px;height:42.2px;background:#4c50d2;"></div>
<span style="position:absolute;left:938.93px;top:773.00px;font:normal 700 35.20px/35.20px 'Liberation Sans',sans-serif;color:#fff;white-space:pre;transform-origin:0 0;transform:scaleX(1.0494);-webkit-text-stroke:0.80px #fff;">Top 5 Revenue Streams ($'000) - 5 years to December 2030</span>
<div style="position:absolute;left:82.0px;top:1537.0px;width:2741.2px;height:41.8px;background:#4c50d2;"></div>
<div style="position:absolute;left:1824.0px;top:1537.0px;width:1.2px;height:41.8px;background:#dfe0f5;"></div>
<span style="position:absolute;left:691.04px;top:1540.00px;font:normal 700 35.20px/35.20px 'Liberation Sans',sans-serif;color:#fff;white-space:pre;transform-origin:0 0;transform:scaleX(1.0773);-webkit-text-stroke:0.80px #fff;">Revenue Depth ($'000) - 2026</span>
<span style="position:absolute;left:2036.52px;top:1540.00px;font:normal 700 35.20px/35.20px 'Liberation Sans',sans-serif;color:#fff;white-space:pre;transform-origin:0 0;transform:scaleX(1.0819);-webkit-text-stroke:0.80px #fff;">Monthly Run-Rate ($'000) - 2026</span>
<div style="position:absolute;left:2520.4px;top:1579.4px;width:303.4px;height:28.9px;background:#fff066;border:1.5px solid #d5d5ea;box-sizing:border-box;"></div>
<span style="position:absolute;left:2645.16px;top:1583.00px;font:normal 700 22.00px/22.00px 'Liberation Sans',sans-serif;color:#1a1a1a;white-space:pre;transform-origin:0 0;transform:scaleX(1.1495);-webkit-text-stroke:0.50px #1a1a1a;">2026</span>
<svg width="2902" height="1762"><path d="M175.6 1491.5H1618.8" stroke="#4f6fae" stroke-width="1"/><path d="M175.6 1427.5H1618.8" stroke="#4f6fae" stroke-width="1"/><path d="M175.6 1363.5H1618.8" stroke="#4f6fae" stroke-width="1"/><path d="M175.6 1300.5H1618.8" stroke="#4f6fae" stroke-width="1"/><path d="M175.6 1236.5H1618.8" stroke="#4f6fae" stroke-width="1"/><path d="M175.6 1172.5H1618.8" stroke="#4f6fae" stroke-width="1"/><path d="M175.6 1108.5H1618.8" stroke="#4f6fae" stroke-width="1"/><path d="M175.6 1045.5H1618.8" stroke="#4f6fae" stroke-width="1"/><path d="M175.6 981.5H1618.8" stroke="#4f6fae" stroke-width="1"/><path d="M175.6 917.5H1618.8" stroke="#4f6fae" stroke-width="1"/><path d="M175.6 853.5H1618.8" stroke="#4f6fae" stroke-width="1"/><rect x="224.3" y="1264.03" width="192.6" height="227.57" fill="#4ab3e8"/><rect x="272.9" y="1360.0" width="95.4" height="35.4" fill="#dce9f6"/><rect x="224.3" y="1080.03" width="192.6" height="184.29" fill="#4c50d2"/><rect x="269.7" y="1154.3" width="101.8" height="35.4" fill="#b0b2ee"/><rect x="224.3" y="960.99" width="192.6" height="119.34" fill="#f07c72"/><rect x="276.9" y="1002.8" width="87.4" height="35.4" fill="#f8ccb0"/><rect x="224.3" y="891.73" width="192.6" height="69.56" fill="#f5b400"/><rect x="276.9" y="908.7" width="87.4" height="35.4" fill="#fff2d0"/><rect x="224.3" y="853.40" width="192.6" height="38.63" fill="#2db3a8"/><rect x="280.1" y="854.9" width="81.0" height="35.4" fill="#e0f0dc"/><rect x="513" y="1267.52" width="191.9" height="224.08" fill="#4ab3e8"/><rect x="561.2" y="1361.7" width="95.4" height="35.4" fill="#dce9f6"/><rect x="513" y="1083.80" width="191.9" height="184.02" fill="#4c50d2"/><rect x="558.1" y="1158.0" width="101.8" height="35.4" fill="#b0b2ee"/><rect x="513" y="964.18" width="191.9" height="119.91" fill="#f07c72"/><rect x="565.2" y="1006.3" width="87.4" height="35.4" fill="#f8ccb0"/><rect x="513" y="891.58" width="191.9" height="72.90" fill="#f5b400"/><rect x="565.2" y="910.2" width="87.4" height="35.4" fill="#fff2d0"/><rect x="513" y="853.40" width="191.9" height="38.48" fill="#2db3a8"/><rect x="568.5" y="854.8" width="81.0" height="35.4" fill="#e0f0dc"/><rect x="802.1" y="1270.05" width="191.6" height="221.55" fill="#4ab3e8"/><rect x="850.2" y="1363.0" width="95.4" height="35.4" fill="#dce9f6"/><rect x="802.1" y="1086.26" width="191.6" height="184.09" fill="#4c50d2"/><rect x="847.0" y="1160.5" width="101.8" height="35.4" fill="#b0b2ee"/><rect x="802.1" y="965.11" width="191.6" height="121.45" fill="#f07c72"/><rect x="854.2" y="1008.0" width="87.4" height="35.4" fill="#f8ccb0"/><rect x="802.1" y="890.39" width="191.6" height="75.02" fill="#f5b400"/><rect x="854.2" y="910.0" width="87.4" height="35.4" fill="#fff2d0"/><rect x="802.1" y="853.40" width="191.6" height="37.29" fill="#2db3a8"/><rect x="857.4" y="854.6" width="81.0" height="35.0" fill="#e0f0dc"/><rect x="1090.2" y="1273.29" width="192.6" height="218.31" fill="#4ab3e8"/><rect x="1138.8" y="1364.6" width="95.4" height="35.4" fill="#dce9f6"/><rect x="1090.2" y="1090.10" width="192.6" height="183.49" fill="#4c50d2"/><rect x="1135.6" y="1164.0" width="101.8" height="35.4" fill="#b0b2ee"/><rect x="1090.2" y="968.41" width="192.6" height="121.99" fill="#f07c72"/><rect x="1135.6" y="1011.6" width="101.8" height="35.4" fill="#f8ccb0"/><rect x="1090.2" y="888.92" width="192.6" height="79.79" fill="#f5b400"/><rect x="1142.8" y="911.0" width="87.4" height="35.4" fill="#fff2d0"/><rect x="1090.2" y="853.39" width="192.6" height="35.83" fill="#2db3a8"/><rect x="1146.0" y="854.6" width="81.0" height="33.5" fill="#e0f0dc"/><rect x="1379.2" y="1275.64" width="192.6" height="215.96" fill="#4ab3e8"/><rect x="1427.8" y="1365.8" width="95.4" height="35.4" fill="#dce9f6"/><rect x="1379.2" y="1092.20" width="192.6" height="183.74" fill="#4c50d2"/><rect x="1424.6" y="1166.2" width="101.8" height="35.4" fill="#b0b2ee"/><rect x="1379.2" y="970.11" width="192.6" height="122.39" fill="#f07c72"/><rect x="1424.6" y="1013.5" width="101.8" height="35.4" fill="#f8ccb0"/><rect x="1379.2" y="888.57" width="192.6" height="81.84" fill="#f5b400"/><rect x="1431.8" y="911.6" width="87.4" height="35.4" fill="#fff2d0"/><rect x="1379.2" y="853.40" width="192.6" height="35.47" fill="#2db3a8"/><rect x="1435.0" y="854.6" width="81.0" height="33.2" fill="#e0f0dc"/><path d="M175.6 853.5H1618.8" stroke="#4f6fae" stroke-width="1"/><path d="M1661 903.5H1714.500" stroke="#4ab3e8" stroke-width="4.200" stroke-linecap="round"/><circle cx="1686.7" cy="903.5" r="5" fill="#4ab3e8"/><path d="M1661 1035.6H1714.500" stroke="#4c50d2" stroke-width="4.200" stroke-linecap="round"/><rect x="1681.7" y="1030.6" width="10" height="10" fill="#4c50d2"/><path d="M1661 1167.7H1714.500" stroke="#f07c72" stroke-width="4.200" stroke-linecap="round"/><path d="M1687.5 1162.5l5.600 10.700h-11.200z" fill="#f07c72"/><path d="M1661 1299.8H1714.500" stroke="#f5b400" stroke-width="4.200" stroke-linecap="round"/><path d="M1682.2 1295.3l9 9M1691.2 1295.3l-9 9" stroke="#e8a000" stroke-width="1.200"/><path d="M1661 1431.9H1714.500" stroke="#2db3a8" stroke-width="4.200" stroke-linecap="round"/><rect x="1681.7" y="1426.9" width="10" height="10" fill="#5fb06a"/><path d="M2052.3 1489.5H2822.6" stroke="#6a9cc0" stroke-width="1"/><path d="M2052.3 1362.5H2822.6" stroke="#6a9cc0" stroke-width="1"/><path d="M2052.3 1235.5H2822.6" stroke="#6a9cc0" stroke-width="1"/><path d="M2052.3 1107.5H2822.6" stroke="#6a9cc0" stroke-width="1"/><path d="M2052.3 980.5H2822.6" stroke="#6a9cc0" stroke-width="1"/><path d="M2052.3 853.5H2822.6" stroke="#6a9cc0" stroke-width="1"/><polyline points="2128.9,1127.3 2282.9,1081.3 2436.9,1030.9 2590.9,981.6 2744.9,946.3" fill="none" stroke="#4ab3e8" stroke-width="4.400" stroke-linejoin="round" stroke-linecap="round"/><circle cx="2128.9" cy="1127.3" r="7" fill="#4ab3e8"/><circle cx="2282.9" cy="1081.3" r="7" fill="#4ab3e8"/><circle cx="2436.9" cy="1030.9" r="7" fill="#4ab3e8"/><circle cx="2590.9" cy="981.6" r="7" fill="#4ab3e8"/><circle cx="2744.9" cy="946.3" r="7" fill="#4ab3e8"/><polyline points="2128.9,1196.3 2282.9,1154.4 2436.9,1108.6 2590.9,1062.7 2744.9,1027.5" fill="none" stroke="#4c50d2" stroke-width="4.400" stroke-linejoin="round" stroke-linecap="round"/><rect x="2120.2" y="1187.6" width="17.400" height="17.400" fill="#4c50d2"/><rect x="2274.2" y="1145.7" width="17.400" height="17.400" fill="#4c50d2"/><rect x="2428.2" y="1099.9" width="17.400" height="17.400" fill="#4c50d2"/><rect x="2582.2" y="1054.0" width="17.400" height="17.400" fill="#4c50d2"/><rect x="2736.2" y="1018.8" width="17.400" height="17.400" fill="#4c50d2"/><polyline points="2128.9,1299.8 2282.9,1271.4 2436.9,1238.4 2590.9,1206.0 2744.9,1182.0" fill="none" stroke="#f07c72" stroke-width="4.400" stroke-linejoin="round" stroke-linecap="round"/><path d="M2128.9 1291.3l8.800 16.500h-17.600z" fill="#f07c72"/><path d="M2282.9 1262.9l8.800 16.500h-17.600z" fill="#f07c72"/><path d="M2436.9 1229.9l8.800 16.500h-17.600z" fill="#f07c72"/><path d="M2590.9 1197.5l8.800 16.500h-17.600z" fill="#f07c72"/><path d="M2744.9 1173.5l8.800 16.500h-17.600z" fill="#f07c72"/><polyline points="2128.9,1379.2 2282.9,1357.1 2436.9,1334.7 2590.9,1304.4 2744.9,1284.2" fill="none" stroke="#f5b400" stroke-width="4.400" stroke-linejoin="round" stroke-linecap="round"/><rect x="2120.2" y="1370.5" width="17.400" height="17.400" fill="#f5b400"/><rect x="2274.2" y="1348.4" width="17.400" height="17.400" fill="#f5b400"/><rect x="2428.2" y="1326.0" width="17.400" height="17.400" fill="#f5b400"/><rect x="2582.2" y="1295.7" width="17.400" height="17.400" fill="#f5b400"/><rect x="2736.2" y="1275.5" width="17.400" height="17.400" fill="#f5b400"/><polyline points="2128.9,1428.5 2282.9,1419.9 2436.9,1412.9 2590.9,1406.8 2744.9,1401.0" fill="none" stroke="#2db3a8" stroke-width="4.400" stroke-linejoin="round" stroke-linecap="round"/><rect x="2120.2" y="1419.8" width="17.400" height="17.400" fill="#2db3a8"/><rect x="2274.2" y="1411.2" width="17.400" height="17.400" fill="#2db3a8"/><rect x="2428.2" y="1404.2" width="17.400" height="17.400" fill="#2db3a8"/><rect x="2582.2" y="1398.1" width="17.400" height="17.400" fill="#2db3a8"/><rect x="2736.2" y="1392.3" width="17.400" height="17.400" fill="#2db3a8"/><path d="M82 1620.500H1563" stroke="#6a9cc0" stroke-width="1"/></svg>
<span style="position:absolute;left:280.76px;top:1368.00px;font:normal 700 22.60px/22.60px 'Liberation Sans',sans-serif;color:#000;white-space:pre;transform-origin:0 0;transform:scaleX(1.1393);-webkit-text-stroke:0.50px #000;">14,231</span>
<span style="position:absolute;left:283.92px;top:1163.00px;font:normal 700 22.60px/22.60px 'Liberation Sans',sans-serif;color:#000;white-space:pre;transform-origin:0 0;transform:scaleX(1.1627);-webkit-text-stroke:0.50px #000;">11,521</span>
<span style="position:absolute;left:291.63px;top:1011.00px;font:normal 700 22.60px/22.60px 'Liberation Sans',sans-serif;color:#000;white-space:pre;transform-origin:0 0;transform:scaleX(1.1229);-webkit-text-stroke:0.50px #000;">7,454</span>
<span style="position:absolute;left:292.27px;top:917.00px;font:normal 700 22.60px/22.60px 'Liberation Sans',sans-serif;color:#000;white-space:pre;transform-origin:0 0;transform:scaleX(1.1275);-webkit-text-stroke:0.50px #000;">4,337</span>
<span style="position:absolute;left:288.55px;top:863.00px;font:normal 700 22.60px/22.60px 'Liberation Sans',sans-serif;color:#000;white-space:pre;transform-origin:0 0;transform:scaleX(1.1368);-webkit-text-stroke:0.50px #000;">2,400</span>
<span style="position:absolute;left:569.10px;top:1370.00px;font:normal 700 22.60px/22.60px 'Liberation Sans',sans-serif;color:#000;white-space:pre;transform-origin:0 0;transform:scaleX(1.1451);-webkit-text-stroke:0.50px #000;">16,037</span>
<span style="position:absolute;left:572.30px;top:1166.00px;font:normal 700 22.60px/22.60px 'Liberation Sans',sans-serif;color:#000;white-space:pre;transform-origin:0 0;transform:scaleX(1.1431);-webkit-text-stroke:0.50px #000;">13,166</span>
<span style="position:absolute;left:580.23px;top:1015.00px;font:normal 700 22.60px/22.60px 'Liberation Sans',sans-serif;color:#000;white-space:pre;transform-origin:0 0;transform:scaleX(1.1344);-webkit-text-stroke:0.50px #000;">8,572</span>
<span style="position:absolute;left:580.23px;top:919.00px;font:normal 700 22.60px/22.60px 'Liberation Sans',sans-serif;color:#000;white-space:pre;transform-origin:0 0;transform:scaleX(1.1321);-webkit-text-stroke:0.50px #000;">5,203</span>
<span style="position:absolute;left:576.90px;top:863.00px;font:normal 700 22.60px/22.60px 'Liberation Sans',sans-serif;color:#000;white-space:pre;transform-origin:0 0;transform:scaleX(1.1344);-webkit-text-stroke:0.50px #000;">2,736</span>
<span style="position:absolute;left:858.05px;top:1371.00px;font:normal 700 22.60px/22.60px 'Liberation Sans',sans-serif;color:#000;white-space:pre;transform-origin:0 0;transform:scaleX(1.1431);-webkit-text-stroke:0.50px #000;">18,016</span>
<span style="position:absolute;left:861.25px;top:1169.00px;font:normal 700 22.60px/22.60px 'Liberation Sans',sans-serif;color:#000;white-space:pre;transform-origin:0 0;transform:scaleX(1.1431);-webkit-text-stroke:0.50px #000;">14,966</span>
<span style="position:absolute;left:869.06px;top:1016.00px;font:normal 700 22.60px/22.60px 'Liberation Sans',sans-serif;color:#000;white-space:pre;transform-origin:0 0;transform:scaleX(1.1298);-webkit-text-stroke:0.50px #000;">9,865</span>
<span style="position:absolute;left:869.06px;top:918.00px;font:normal 700 22.60px/22.60px 'Liberation Sans',sans-serif;color:#000;white-space:pre;transform-origin:0 0;transform:scaleX(1.1206);-webkit-text-stroke:0.50px #000;">6,084</span>
<span style="position:absolute;left:866.11px;top:863.00px;font:normal 700 22.60px/22.60px 'Liberation Sans',sans-serif;color:#000;white-space:pre;transform-origin:0 0;transform:scaleX(1.1321);-webkit-text-stroke:0.50px #000;">3,012</span>
<span style="position:absolute;left:1146.67px;top:1373.00px;font:normal 700 22.60px/22.60px 'Liberation Sans',sans-serif;color:#000;white-space:pre;transform-origin:0 0;transform:scaleX(1.1317);-webkit-text-stroke:0.50px #000;">19,954</span>
<span style="position:absolute;left:1149.85px;top:1172.00px;font:normal 700 22.60px/22.60px 'Liberation Sans',sans-serif;color:#000;white-space:pre;transform-origin:0 0;transform:scaleX(1.1451);-webkit-text-stroke:0.50px #000;">16,767</span>
<span style="position:absolute;left:1149.82px;top:1020.00px;font:normal 700 22.60px/22.60px 'Liberation Sans',sans-serif;color:#000;white-space:pre;transform-origin:0 0;transform:scaleX(1.1647);-webkit-text-stroke:0.50px #000;">11,138</span>
<span style="position:absolute;left:1157.52px;top:919.00px;font:normal 700 22.60px/22.60px 'Liberation Sans',sans-serif;color:#000;white-space:pre;transform-origin:0 0;transform:scaleX(1.1368);-webkit-text-stroke:0.50px #000;">7,276</span>
<span style="position:absolute;left:1154.71px;top:862.00px;font:normal 700 22.60px/22.60px 'Liberation Sans',sans-serif;color:#000;white-space:pre;transform-origin:0 0;transform:scaleX(1.1321);-webkit-text-stroke:0.50px #000;">3,252</span>
<span style="position:absolute;left:1436.30px;top:1374.00px;font:normal 700 22.60px/22.60px 'Liberation Sans',sans-serif;color:#000;white-space:pre;transform-origin:0 0;transform:scaleX(1.1317);-webkit-text-stroke:0.50px #000;">21,338</span>
<span style="position:absolute;left:1438.85px;top:1175.00px;font:normal 700 22.60px/22.60px 'Liberation Sans',sans-serif;color:#000;white-space:pre;transform-origin:0 0;transform:scaleX(1.1451);-webkit-text-stroke:0.50px #000;">18,150</span>
<span style="position:absolute;left:1438.85px;top:1022.00px;font:normal 700 22.60px/22.60px 'Liberation Sans',sans-serif;color:#000;white-space:pre;transform-origin:0 0;transform:scaleX(1.1451);-webkit-text-stroke:0.50px #000;">12,080</span>
<span style="position:absolute;left:1446.78px;top:920.00px;font:normal 700 22.60px/22.60px 'Liberation Sans',sans-serif;color:#000;white-space:pre;transform-origin:0 0;transform:scaleX(1.1298);-webkit-text-stroke:0.50px #000;">8,068</span>
<span style="position:absolute;left:1443.71px;top:862.00px;font:normal 700 22.60px/22.60px 'Liberation Sans',sans-serif;color:#000;white-space:pre;transform-origin:0 0;transform:scaleX(1.1321);-webkit-text-stroke:0.50px #000;">3,480</span>
<span style="position:absolute;left:114.90px;top:1481.00px;font:normal 700 21.80px/21.80px 'Liberation Sans',sans-serif;color:#000;white-space:pre;transform-origin:0 0;transform:scaleX(1.2598);-webkit-text-stroke:0.50px #000;">0%</span>
<span style="position:absolute;left:98.52px;top:1417.00px;font:normal 700 21.80px/21.80px 'Liberation Sans',sans-serif;color:#000;white-space:pre;transform-origin:0 0;transform:scaleX(1.2863);-webkit-text-stroke:0.50px #000;">10%</span>
<span style="position:absolute;left:99.23px;top:1353.00px;font:normal 700 21.80px/21.80px 'Liberation Sans',sans-serif;color:#000;white-space:pre;transform-origin:0 0;transform:scaleX(1.2697);-webkit-text-stroke:0.50px #000;">20%</span>
<span style="position:absolute;left:99.51px;top:1289.00px;font:normal 700 21.80px/21.80px 'Liberation Sans',sans-serif;color:#000;white-space:pre;transform-origin:0 0;transform:scaleX(1.2632);-webkit-text-stroke:0.50px #000;">30%</span>
<span style="position:absolute;left:99.79px;top:1225.00px;font:normal 700 21.80px/21.80px 'Liberation Sans',sans-serif;color:#000;white-space:pre;transform-origin:0 0;transform:scaleX(1.2568);-webkit-text-stroke:0.50px #000;">40%</span>
<span style="position:absolute;left:99.37px;top:1162.00px;font:normal 700 21.80px/21.80px 'Liberation Sans',sans-serif;color:#000;white-space:pre;transform-origin:0 0;transform:scaleX(1.2665);-webkit-text-stroke:0.50px #000;">50%</span>
<span style="position:absolute;left:99.23px;top:1098.00px;font:normal 700 21.80px/21.80px 'Liberation Sans',sans-serif;color:#000;white-space:pre;transform-origin:0 0;transform:scaleX(1.2697);-webkit-text-stroke:0.50px #000;">60%</span>
<span style="position:absolute;left:99.09px;top:1034.00px;font:normal 700 21.80px/21.80px 'Liberation Sans',sans-serif;color:#000;white-space:pre;transform-origin:0 0;transform:scaleX(1.2730);-webkit-text-stroke:0.50px #000;">70%</span>
<span style="position:absolute;left:99.37px;top:970.00px;font:normal 700 21.80px/21.80px 'Liberation Sans',sans-serif;color:#000;white-space:pre;transform-origin:0 0;transform:scaleX(1.2665);-webkit-text-stroke:0.50px #000;">80%</span>
<span style="position:absolute;left:99.23px;top:906.00px;font:normal 700 21.80px/21.80px 'Liberation Sans',sans-serif;color:#000;white-space:pre;transform-origin:0 0;transform:scaleX(1.2697);-webkit-text-stroke:0.50px #000;">90%</span>
<span style="position:absolute;left:84.87px;top:843.00px;font:normal 700 21.80px/21.80px 'Liberation Sans',sans-serif;color:#000;white-space:pre;transform-origin:0 0;transform:scaleX(1.2492);-webkit-text-stroke:0.50px #000;">100%</span>
<span style="position:absolute;left:291.95px;top:1510.00px;font:normal 700 21.80px/21.80px 'Liberation Sans',sans-serif;color:#000;white-space:pre;transform-origin:0 0;transform:scaleX(1.1814);-webkit-text-stroke:0.50px #000;">2026</span>
<span style="position:absolute;left:2101.26px;top:1508.00px;font:normal 700 21.80px/21.80px 'Liberation Sans',sans-serif;color:#000;white-space:pre;transform-origin:0 0;transform:scaleX(1.1601);-webkit-text-stroke:0.50px #000;">2026</span>
<span style="position:absolute;left:580.30px;top:1510.00px;font:normal 700 21.80px/21.80px 'Liberation Sans',sans-serif;color:#000;white-space:pre;transform-origin:0 0;transform:scaleX(1.1841);-webkit-text-stroke:0.50px #000;">2027</span>
<span style="position:absolute;left:2255.26px;top:1508.00px;font:normal 700 21.80px/21.80px 'Liberation Sans',sans-serif;color:#000;white-space:pre;transform-origin:0 0;transform:scaleX(1.1628);-webkit-text-stroke:0.50px #000;">2027</span>
<span style="position:absolute;left:869.25px;top:1510.00px;font:normal 700 21.80px/21.80px 'Liberation Sans',sans-serif;color:#000;white-space:pre;transform-origin:0 0;transform:scaleX(1.1786);-webkit-text-stroke:0.50px #000;">2028</span>
<span style="position:absolute;left:2409.27px;top:1508.00px;font:normal 700 21.80px/21.80px 'Liberation Sans',sans-serif;color:#000;white-space:pre;transform-origin:0 0;transform:scaleX(1.1574);-webkit-text-stroke:0.50px #000;">2028</span>
<span style="position:absolute;left:1157.85px;top:1510.00px;font:normal 700 21.80px/21.80px 'Liberation Sans',sans-serif;color:#000;white-space:pre;transform-origin:0 0;transform:scaleX(1.1814);-webkit-text-stroke:0.50px #000;">2029</span>
<span style="position:absolute;left:2563.26px;top:1508.00px;font:normal 700 21.80px/21.80px 'Liberation Sans',sans-serif;color:#000;white-space:pre;transform-origin:0 0;transform:scaleX(1.1601);-webkit-text-stroke:0.50px #000;">2029</span>
<span style="position:absolute;left:1446.85px;top:1510.00px;font:normal 700 21.80px/21.80px 'Liberation Sans',sans-serif;color:#000;white-space:pre;transform-origin:0 0;transform:scaleX(1.1841);-webkit-text-stroke:0.50px #000;">2030</span>
<span style="position:absolute;left:2717.26px;top:1508.00px;font:normal 700 21.80px/21.80px 'Liberation Sans',sans-serif;color:#000;white-space:pre;transform-origin:0 0;transform:scaleX(1.1628);-webkit-text-stroke:0.50px #000;">2030</span>
<span style="position:absolute;left:1719.39px;top:894.00px;font:normal 700 21.80px/21.80px 'Liberation Sans',sans-serif;color:#000;white-space:pre;transform-origin:0 0;transform:scaleX(1.0862);-webkit-text-stroke:0.50px #000;">Standard King</span>
<span style="position:absolute;left:1718.95px;top:1026.00px;font:normal 700 21.80px/21.80px 'Liberation Sans',sans-serif;color:#000;white-space:pre;transform-origin:0 0;transform:scaleX(1.0969);-webkit-text-stroke:0.50px #000;">Deluxe Queen</span>
<span style="position:absolute;left:1720.27px;top:1158.00px;font:normal 700 21.80px/21.80px 'Liberation Sans',sans-serif;color:#000;white-space:pre;transform-origin:0 0;transform:scaleX(1.0791);-webkit-text-stroke:0.50px #000;">Executive Suite</span>
<span style="position:absolute;left:1719.07px;top:1290.00px;font:normal 700 21.80px/21.80px 'Liberation Sans',sans-serif;color:#000;white-space:pre;transform-origin:0 0;transform:scaleX(1.0832);-webkit-text-stroke:0.50px #000;">Penthouse</span>
<span style="position:absolute;left:1719.65px;top:1422.00px;font:normal 700 21.80px/21.80px 'Liberation Sans',sans-serif;color:#000;white-space:pre;transform-origin:0 0;transform:scaleX(1.0922);-webkit-text-stroke:0.50px #000;">Other Revenue</span>
<span style="position:absolute;left:1961.23px;top:1351.00px;font:normal 700 21.80px/21.80px 'Liberation Sans',sans-serif;color:#000;white-space:pre;transform-origin:0 0;transform:scaleX(1.1742);-webkit-text-stroke:0.50px #000;">5,000</span>
<span style="position:absolute;left:1945.95px;top:1224.00px;font:normal 700 21.80px/21.80px 'Liberation Sans',sans-serif;color:#000;white-space:pre;transform-origin:0 0;transform:scaleX(1.1886);-webkit-text-stroke:0.50px #000;">10,000</span>
<span style="position:absolute;left:1945.95px;top:1096.00px;font:normal 700 21.80px/21.80px 'Liberation Sans',sans-serif;color:#000;white-space:pre;transform-origin:0 0;transform:scaleX(1.1886);-webkit-text-stroke:0.50px #000;">15,000</span>
<span style="position:absolute;left:1946.60px;top:969.00px;font:normal 700 21.80px/21.80px 'Liberation Sans',sans-serif;color:#000;white-space:pre;transform-origin:0 0;transform:scaleX(1.1787);-webkit-text-stroke:0.50px #000;">20,000</span>
<span style="position:absolute;left:1946.60px;top:842.00px;font:normal 700 21.80px/21.80px 'Liberation Sans',sans-serif;color:#000;white-space:pre;transform-origin:0 0;transform:scaleX(1.1787);-webkit-text-stroke:0.50px #000;">25,000</span>
<span style="position:absolute;left:2016.10px;top:1477.00px;font:normal 700 21.80px/21.80px 'Liberation Sans',sans-serif;color:#000;white-space:pre;transform-origin:0 0;transform:scaleX(1.2592);">-</span>
<div style="position:absolute;left:53px;top:1640px;width:2807px;height:30.2px;overflow:hidden">
<span style="position:absolute;left:179.18px;top:17.00px;font:normal 700 23.50px/23.50px 'Liberation Sans',sans-serif;color:#000;white-space:pre;transform-origin:0 0;transform:scaleX(1.0770);-webkit-text-stroke:0.50px #000;">14,231.1</span>
<span style="position:absolute;left:1597.29px;top:14.00px;font:normal 700 21.80px/21.80px 'Liberation Sans',sans-serif;color:#000;white-space:pre;transform-origin:0 0;transform:scaleX(1.0787);-webkit-text-stroke:0.50px #000;">Standard King</span>
<div style="position:absolute;left:1580.00px;top:22.00px;width:12.5px;height:13.0px;background:#4ab3e8;"></div>
</div>
<div style="position:absolute;left:2860.2px;top:278.0px;width:30.8px;height:1392.2px;background:#0a0a0a;"></div>
<div style="position:absolute;left:2862.0px;top:279.0px;width:26.5px;height:1393.0px;background:#161616;border-radius:13px;"></div>
<div style="position:absolute;left:2870.2px;top:303.8px;width:11.8px;height:561.5px;background:#9c9c9c;border-radius:6px;"></div>
<svg width="2902" height="1762"><path d="M2876 287l6.300 8h-12.600z" fill="#9c9c9c" stroke="#9c9c9c" stroke-width="1.500" stroke-linejoin="round"/><path d="M2876 1662.500l6.300-8h-12.600z" fill="#9c9c9c" stroke="#9c9c9c" stroke-width="1.500" stroke-linejoin="round"/></svg>
<div style="position:absolute;left:11.0px;top:1670.2px;width:2880.0px;height:47.8px;background:#0a0a0a;"></div>
<div style="position:absolute;left:11.0px;top:1718.0px;width:2880.0px;height:32.6px;background:#141414;"></div>
<div style="position:absolute;left:11.0px;top:1717.5px;width:2880.0px;height:1.0px;background:#262626;"></div>
<div style="position:absolute;left:177.0px;top:1676.3px;width:88.9px;height:35.4px;background:#fcec62;border-radius:6px;"></div>
<div style="position:absolute;left:278.8px;top:1676.3px;width:87.2px;height:35.4px;background:#fcec62;border-radius:6px;"></div>
<div style="position:absolute;left:379.1px;top:1676.3px;width:112.7px;height:35.4px;background:#fcec62;border-radius:6px;"></div>
<div style="position:absolute;left:505.2px;top:1676.3px;width:89.6px;height:35.4px;background:#fcec62;border-radius:6px;"></div>
<div style="position:absolute;left:607.8px;top:1676.3px;width:42.0px;height:35.4px;background:#4ab3e8;border-radius:6px;"></div>
<div style="position:absolute;left:663.0px;top:1676.3px;width:47.8px;height:35.4px;background:#4ab3e8;border-radius:6px;"></div>
<div style="position:absolute;left:724.0px;top:1676.3px;width:47.8px;height:35.4px;background:#4ab3e8;border-radius:6px;"></div>
<div style="position:absolute;left:785.0px;top:1676.3px;width:115.0px;height:35.4px;background:#4ab3e8;border-radius:6px;"></div>
<div style="position:absolute;left:912.8px;top:1676.3px;width:115.1px;height:35.4px;background:#4ab3e8;border-radius:6px;"></div>
<div style="position:absolute;left:1041.0px;top:1676.3px;width:114.0px;height:35.4px;background:#4ab3e8;border-radius:6px;"></div>
<div style="position:absolute;left:1167.7px;top:1676.3px;width:48.3px;height:35.4px;background:#4ab3e8;border-radius:6px;"></div>
<div style="position:absolute;left:1228.7px;top:1676.3px;width:72.3px;height:35.4px;background:#4ab3e8;border-radius:6px;"></div>
<div style="position:absolute;left:1313.8px;top:1676.3px;width:85.0px;height:35.4px;background:#4ab3e8;border-radius:6px;"></div>
<div style="position:absolute;left:1412.1px;top:1676.3px;width:63.6px;height:35.4px;background:#4ab3e8;border-radius:6px;"></div>
<div style="position:absolute;left:1488.8px;top:1676.3px;width:169.2px;height:35.4px;background:#4ab3e8;border-radius:6px;"></div>
<div style="position:absolute;left:1671.0px;top:1676.3px;width:83.0px;height:35.4px;background:#4ab3e8;border-radius:6px;"></div>
<div style="position:absolute;left:1766.8px;top:1676.3px;width:96.0px;height:35.4px;background:#4ab3e8;border-radius:6px;"></div>
<svg width="2902" height="1762"><path d="M272.2 1680.500V1708" stroke="#5a5a5a" stroke-width="1.200"/><path d="M372.5 1680.500V1708" stroke="#5a5a5a" stroke-width="1.200"/><path d="M498.4 1680.500V1708" stroke="#5a5a5a" stroke-width="1.200"/><path d="M601.3 1680.500V1708" stroke="#5a5a5a" stroke-width="1.200"/><path d="M656.4 1680.500V1708" stroke="#5a5a5a" stroke-width="1.200"/><path d="M717.4 1680.500V1708" stroke="#5a5a5a" stroke-width="1.200"/><path d="M778.4 1680.500V1708" stroke="#5a5a5a" stroke-width="1.200"/><path d="M906.4 1680.500V1708" stroke="#5a5a5a" stroke-width="1.200"/><path d="M1034.5 1680.500V1708" stroke="#5a5a5a" stroke-width="1.200"/><path d="M1161.4 1680.500V1708" stroke="#5a5a5a" stroke-width="1.200"/><path d="M1222.4 1680.500V1708" stroke="#5a5a5a" stroke-width="1.200"/><path d="M1307.4 1680.500V1708" stroke="#5a5a5a" stroke-width="1.200"/><path d="M1405.5 1680.500V1708" stroke="#5a5a5a" stroke-width="1.200"/><path d="M1482.3 1680.500V1708" stroke="#5a5a5a" stroke-width="1.200"/><path d="M1664.5 1680.500V1708" stroke="#5a5a5a" stroke-width="1.200"/><path d="M1760.4 1680.500V1708" stroke="#5a5a5a" stroke-width="1.200"/><path d="M1869.4 1680.500V1708" stroke="#5a5a5a" stroke-width="1.200"/><path d="M2033.4 1680.500V1708" stroke="#5a5a5a" stroke-width="1.200"/><path d="M54 1685.500l-7 7.500 7 7.500" fill="none" stroke="#d0d0d0" stroke-width="1.600" stroke-linecap="round" stroke-linejoin="round"/><path d="M95.500 1685.500l7 7.500-7 7.500" fill="none" stroke="#d0d0d0" stroke-width="1.600" stroke-linecap="round" stroke-linejoin="round"/><circle cx="139.5" cy="1692.800" r="1.900" fill="#d0d0d0"/><circle cx="2088.5" cy="1692.800" r="1.900" fill="#d0d0d0"/><circle cx="146" cy="1692.800" r="1.900" fill="#d0d0d0"/><circle cx="2095" cy="1692.800" r="1.900" fill="#d0d0d0"/><circle cx="152.5" cy="1692.800" r="1.900" fill="#d0d0d0"/><circle cx="2101.5" cy="1692.800" r="1.900" fill="#d0d0d0"/><path d="M2134.500 1693h17M2143 1684.500v17" stroke="#d0d0d0" stroke-width="1.600"/><circle cx="2191.500" cy="1686.5" r="1.800" fill="#d0d0d0"/><circle cx="2191.500" cy="1693" r="1.800" fill="#d0d0d0"/><circle cx="2191.500" cy="1699.5" r="1.800" fill="#d0d0d0"/></svg>
<div style="position:absolute;left:1876.0px;top:1670.2px;width:150.5px;height:42.3px;background:linear-gradient(#ffffff 45%,#d4ebf8);border-radius:0 0 7px 7px;"></div>
<div style="position:absolute;left:1888.4px;top:1705.3px;width:126.4px;height:3.0px;background:#1e8c4e;border-radius:1.5px;"></div>
<div style="position:absolute;left:2040.3px;top:1676.3px;width:31.1px;height:35.4px;background:#4ab3e8;border-radius:6px 0 0 6px;"></div>
<span style="position:absolute;left:189.59px;top:1686.00px;font:normal 400 21.50px/21.50px 'Liberation Sans',sans-serif;color:#151515;white-space:pre;transform-origin:0 0;transform:scaleX(0.9654);">Payroll</span>
<span style="position:absolute;left:290.98px;top:1686.00px;font:normal 400 21.50px/21.50px 'Liberation Sans',sans-serif;color:#151515;white-space:pre;transform-origin:0 0;transform:scaleX(0.8546);">CAPEX</span>
<span style="position:absolute;left:391.66px;top:1686.00px;font:normal 400 21.50px/21.50px 'Liberation Sans',sans-serif;color:#151515;white-space:pre;transform-origin:0 0;transform:scaleX(0.9629);">CapTable</span>
<span style="position:absolute;left:517.19px;top:1686.00px;font:normal 400 21.50px/21.50px 'Liberation Sans',sans-serif;color:#151515;white-space:pre;transform-origin:0 0;transform:scaleX(0.9861);">Capital</span>
<span style="position:absolute;left:619.94px;top:1686.00px;font:normal 400 21.50px/21.50px 'Liberation Sans',sans-serif;color:#151515;white-space:pre;transform-origin:0 0;transform:scaleX(0.8326);">IS</span>
<span style="position:absolute;left:674.74px;top:1686.00px;font:normal 400 21.50px/21.50px 'Liberation Sans',sans-serif;color:#151515;white-space:pre;transform-origin:0 0;transform:scaleX(0.8440);">CF</span>
<span style="position:absolute;left:735.44px;top:1686.00px;font:normal 400 21.50px/21.50px 'Liberation Sans',sans-serif;color:#151515;white-space:pre;transform-origin:0 0;transform:scaleX(0.8492);">BS</span>
<span style="position:absolute;left:798.10px;top:1686.00px;font:normal 400 21.50px/21.50px 'Liberation Sans',sans-serif;color:#151515;white-space:pre;transform-origin:0 0;transform:scaleX(0.9270);">Scenarios</span>
<span style="position:absolute;left:926.49px;top:1686.00px;font:normal 400 21.50px/21.50px 'Liberation Sans',sans-serif;color:#151515;white-space:pre;transform-origin:0 0;transform:scaleX(1.0111);">Valuation</span>
<span style="position:absolute;left:1053.58px;top:1686.00px;font:normal 400 21.50px/21.50px 'Liberation Sans',sans-serif;color:#151515;white-space:pre;transform-origin:0 0;transform:scaleX(0.9555);">Summary</span>
<span style="position:absolute;left:1179.68px;top:1686.00px;font:normal 400 21.50px/21.50px 'Liberation Sans',sans-serif;color:#151515;white-space:pre;transform-origin:0 0;transform:scaleX(0.8264);">BE</span>
<span style="position:absolute;left:1240.31px;top:1686.00px;font:normal 400 21.50px/21.50px 'Liberation Sans',sans-serif;color:#151515;white-space:pre;transform-origin:0 0;transform:scaleX(0.8971);">ROIC</span>
<span style="position:absolute;left:1326.29px;top:1686.00px;font:normal 400 21.50px/21.50px 'Liberation Sans',sans-serif;color:#151515;white-space:pre;transform-origin:0 0;transform:scaleX(0.9432);">Charts</span>
<span style="position:absolute;left:1423.92px;top:1686.00px;font:normal 400 21.50px/21.50px 'Liberation Sans',sans-serif;color:#151515;white-space:pre;transform-origin:0 0;transform:scaleX(0.8626);">KPIs</span>
<span style="position:absolute;left:1500.99px;top:1686.00px;font:normal 400 21.50px/21.50px 'Liberation Sans',sans-serif;color:#151515;white-space:pre;transform-origin:0 0;transform:scaleX(0.9381);">Sources &amp; Uses</span>
<span style="position:absolute;left:1682.85px;top:1686.00px;font:normal 400 21.50px/21.50px 'Liberation Sans',sans-serif;color:#151515;white-space:pre;transform-origin:0 0;transform:scaleX(0.9576);">Ratios</span>
<span style="position:absolute;left:1778.60px;top:1686.00px;font:normal 400 21.50px/21.50px 'Liberation Sans',sans-serif;color:#151515;white-space:pre;transform-origin:0 0;transform:scaleX(0.9875);">DuPont</span>
<span style="position:absolute;left:1889.09px;top:1683.00px;font:normal 400 21.50px/21.50px 'Liberation Sans',sans-serif;color:#151515;white-space:pre;transform-origin:0 0;transform:scaleX(0.9485);">Top_Revenue</span>
<div style="position:absolute;left:2040.3px;top:1676px;width:31.1px;height:36px;overflow:hidden"><span style="position:absolute;left:8.5px;top:8.8px;font:400 21.5px/21.5px 'Liberation Sans',sans-serif;color:#151515;white-space:pre">To</span></div>
<div style="position:absolute;left:2216.0px;top:1680.5px;width:643.0px;height:25.5px;background:#161616;border-radius:13px;"></div>
<div style="position:absolute;left:2242.0px;top:1686.6px;width:512.0px;height:13.0px;background:#9c9c9c;border-radius:6.5px;"></div>
<svg width="2902" height="1762"><path d="M2223.500 1693l8-6.300v12.600z" fill="#9c9c9c" stroke="#9c9c9c" stroke-width="1.500" stroke-linejoin="round"/><path d="M2850.500 1693l-8-6.300v12.600z" fill="#9c9c9c" stroke="#9c9c9c" stroke-width="1.500" stroke-linejoin="round"/><path d="M100 1727.500h20M100 1727.500v16h9M120 1727.500v5" fill="none" stroke="#e0e0e0" stroke-width="1.500"/><path d="M100 1731h20" stroke="#e0e0e0" stroke-width="1.200"/><path d="M103 1735h5M103 1739h4" stroke="#e0e0e0" stroke-width="1.300"/><circle cx="115" cy="1739" r="5.300" fill="none" stroke="#e0e0e0" stroke-width="1.500"/><circle cx="115" cy="1739" r="2.200" fill="#e0e0e0"/><circle cx="156" cy="1727.300" r="2.300" fill="none" stroke="#e0e0e0" stroke-width="1.400"/><path d="M148 1731.500c5 2.200 11 2.200 16 0M153 1733v5.500l-3.500 7M159 1733v4l2 3" fill="none" stroke="#e0e0e0" stroke-width="1.500" stroke-linecap="round"/><path d="M157.500 1737.500l9 9M166.500 1737.500l-9 9" stroke="#e0e0e0" stroke-width="1.500" stroke-linecap="round"/><rect x="2445" y="1719" width="59.800" height="31.500" fill="#262626"/><rect x="2465" y="1725" width="18.500" height="18.500" fill="none" stroke="#e0e0e0" stroke-width="1.500"/><path d="M2471.200 1725v18.500M2477.300 1725v18.500M2465 1731.200h18.500M2465 1737.300h18.500" stroke="#e0e0e0" stroke-width="1.500"/><rect x="2525.300" y="1725" width="19.500" height="18.500" fill="none" stroke="#e0e0e0" stroke-width="1.500"/><rect x="2529.800" y="1729.500" width="10.500" height="10" fill="none" stroke="#e0e0e0" stroke-width="1.400"/><path d="M2532 1733h6M2532 1736.200h6" stroke="#e0e0e0" stroke-width="1.200"/><rect x="2585.300" y="1725" width="19.500" height="18.500" fill="none" stroke="#e0e0e0" stroke-width="1.500"/><path d="M2585.300 1734.500h13v-9.500M2591.800 1725v9.500" fill="none" stroke="#e0e0e0" stroke-width="1.500"/><path d="M2633.500 1734.500h10.500M2652.600 1734.800h148.500M2809 1734.500h11M2814.500 1729v11M2727 1731v7" stroke="#e0e0e0" stroke-width="1.300"/><rect x="2732.600" y="1726" width="8" height="17.500" rx="1" fill="#bdbdbd"/></svg>
<span style="position:absolute;left:26.10px;top:1728.00px;font:normal 400 16.00px/16.00px 'Liberation Sans',sans-serif;color:#e6e6e6;white-space:pre;transform-origin:0 0;transform:scaleX(0.9364);">Ready</span>
<span style="position:absolute;left:173.01px;top:1728.00px;font:normal 700 16.00px/16.00px 'Liberation Sans',sans-serif;color:#fff;white-space:pre;transform-origin:0 0;transform:scaleX(0.9851);">Accessibility: Investigate</span>
<span style="position:absolute;left:2839.42px;top:1728.00px;font:normal 400 16.00px/16.00px 'Liberation Sans',sans-serif;color:#e6e6e6;white-space:pre;transform-origin:0 0;transform:scaleX(0.9796);">140%</span>
</body></html>
